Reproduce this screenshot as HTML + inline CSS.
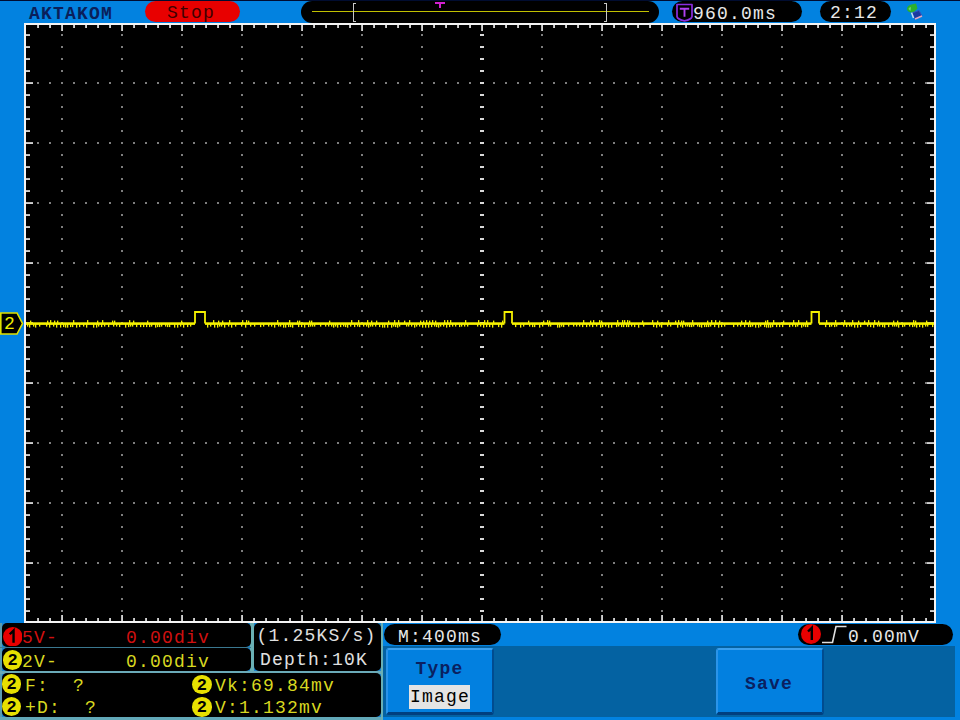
<!DOCTYPE html>
<html><head><meta charset="utf-8"><style>
*{margin:0;padding:0;box-sizing:border-box}
html,body{width:960px;height:720px;overflow:hidden;background:#0282e0}
body{position:relative;font-family:"Liberation Mono",monospace}
.a{position:absolute}
.t{position:absolute;white-space:pre;font-size:18px;line-height:20px;letter-spacing:1.2px}
.pill{position:absolute;background:#000;border-radius:11px}
.pan{position:absolute;background:#000;border-radius:5px}
.btn{position:absolute;background:#0280e0;border-radius:3px;border-top:2px solid #3aa0f0;border-left:2px solid #2a94ea;border-right:2px solid #004c90;border-bottom:3px solid #003f80}
</style></head><body>
<div class="a" style="left:0;top:0;width:960px;height:1px;background:#000c30"></div>
<div class="t" style="left:29px;top:4px;color:#0a1f5a;font-weight:bold">AKTAKOM</div>
<div class="pill" style="left:145px;top:1px;width:95px;height:21px;background:#e80000"></div>
<div class="t" style="left:167px;top:3px;color:#400000">Stop</div>
<div class="pill" style="left:301px;top:1px;width:358px;height:22px"></div>
<div class="a" style="left:312px;top:10.5px;width:337px;height:1.5px;background:#c0c000"></div>
<div class="a" style="left:353px;top:3px;width:3px;height:19px;border:1.5px solid #c8c8c8;border-right:none"></div>
<div class="a" style="left:604px;top:3px;width:3px;height:19px;border:1.5px solid #c8c8c8;border-left:none"></div>
<svg class="a" style="left:435px;top:2px" width="10" height="7"><path d="M0 0H10V2H6V6H4V2H0Z" fill="#d020d0"/></svg>
<div class="pill" style="left:672px;top:1px;width:130px;height:21px"></div>
<svg class="a" style="left:675px;top:3px" width="19" height="19"><path d="M2 1.5H17V13.5Q16.5 16.5 9.5 17.8Q2.5 16.5 2 13.5Z" fill="#000" stroke="#8a2ee0" stroke-width="1.7" stroke-linejoin="round"/><path d="M4.8 5.8H14.2M9.5 5.8V13.8" stroke="#b040f0" stroke-width="1.9"/></svg>
<div class="t" style="left:693px;top:4px;color:#e8e8e8">960.0ms</div>
<div class="pill" style="left:820px;top:1px;width:71px;height:21px"></div>
<div class="t" style="left:830px;top:3px;color:#e8e8e8">2:12</div>
<svg class="a" style="left:904px;top:2px" width="20" height="19"><path d="M8 11L15 8.5L18 14L11 17Z" fill="#1a3aa0" stroke="#3050c0" stroke-width="1"/><path d="M11 17L18 14" stroke="#e0a8c0" stroke-width="1.6"/><path d="M7.5 10.5L9.5 16" stroke="#c0e0f0" stroke-width="1.5"/><path d="M3 7C3 4.5 5 3 7.5 2.5L12 1.5L13.5 6.5L10.5 9.5L7 10.5C4.5 10 3 9 3 7Z" fill="#2cb02c"/><path d="M4.5 7C5 5.5 6 5 7 5.2L6.5 9Z" fill="#70d870"/></svg>
<svg width="960" height="720" style="position:absolute;left:0;top:0"><rect x="25" y="24" width="910" height="598" fill="#000"/><rect x="61" y="34.25" width="2" height="1.5" fill="#a8a8a8"/><rect x="61" y="46.25" width="2" height="1.5" fill="#a8a8a8"/><rect x="61" y="58.25" width="2" height="1.5" fill="#a8a8a8"/><rect x="61" y="70.25" width="2" height="1.5" fill="#a8a8a8"/><rect x="61" y="82.25" width="2" height="1.5" fill="#a8a8a8"/><rect x="61" y="94.25" width="2" height="1.5" fill="#a8a8a8"/><rect x="61" y="106.25" width="2" height="1.5" fill="#a8a8a8"/><rect x="61" y="118.25" width="2" height="1.5" fill="#a8a8a8"/><rect x="61" y="130.25" width="2" height="1.5" fill="#a8a8a8"/><rect x="61" y="142.25" width="2" height="1.5" fill="#a8a8a8"/><rect x="61" y="154.25" width="2" height="1.5" fill="#a8a8a8"/><rect x="61" y="166.25" width="2" height="1.5" fill="#a8a8a8"/><rect x="61" y="178.25" width="2" height="1.5" fill="#a8a8a8"/><rect x="61" y="190.25" width="2" height="1.5" fill="#a8a8a8"/><rect x="61" y="202.25" width="2" height="1.5" fill="#a8a8a8"/><rect x="61" y="214.25" width="2" height="1.5" fill="#a8a8a8"/><rect x="61" y="226.25" width="2" height="1.5" fill="#a8a8a8"/><rect x="61" y="238.25" width="2" height="1.5" fill="#a8a8a8"/><rect x="61" y="250.25" width="2" height="1.5" fill="#a8a8a8"/><rect x="61" y="262.25" width="2" height="1.5" fill="#a8a8a8"/><rect x="61" y="274.25" width="2" height="1.5" fill="#a8a8a8"/><rect x="61" y="286.25" width="2" height="1.5" fill="#a8a8a8"/><rect x="61" y="298.25" width="2" height="1.5" fill="#a8a8a8"/><rect x="61" y="310.25" width="2" height="1.5" fill="#a8a8a8"/><rect x="61" y="322.25" width="2" height="1.5" fill="#a8a8a8"/><rect x="61" y="334.25" width="2" height="1.5" fill="#a8a8a8"/><rect x="61" y="346.25" width="2" height="1.5" fill="#a8a8a8"/><rect x="61" y="358.25" width="2" height="1.5" fill="#a8a8a8"/><rect x="61" y="370.25" width="2" height="1.5" fill="#a8a8a8"/><rect x="61" y="382.25" width="2" height="1.5" fill="#a8a8a8"/><rect x="61" y="394.25" width="2" height="1.5" fill="#a8a8a8"/><rect x="61" y="406.25" width="2" height="1.5" fill="#a8a8a8"/><rect x="61" y="418.25" width="2" height="1.5" fill="#a8a8a8"/><rect x="61" y="430.25" width="2" height="1.5" fill="#a8a8a8"/><rect x="61" y="442.25" width="2" height="1.5" fill="#a8a8a8"/><rect x="61" y="454.25" width="2" height="1.5" fill="#a8a8a8"/><rect x="61" y="466.25" width="2" height="1.5" fill="#a8a8a8"/><rect x="61" y="478.25" width="2" height="1.5" fill="#a8a8a8"/><rect x="61" y="490.25" width="2" height="1.5" fill="#a8a8a8"/><rect x="61" y="502.25" width="2" height="1.5" fill="#a8a8a8"/><rect x="61" y="514.25" width="2" height="1.5" fill="#a8a8a8"/><rect x="61" y="526.25" width="2" height="1.5" fill="#a8a8a8"/><rect x="61" y="538.25" width="2" height="1.5" fill="#a8a8a8"/><rect x="61" y="550.25" width="2" height="1.5" fill="#a8a8a8"/><rect x="61" y="562.25" width="2" height="1.5" fill="#a8a8a8"/><rect x="61" y="574.25" width="2" height="1.5" fill="#a8a8a8"/><rect x="61" y="586.25" width="2" height="1.5" fill="#a8a8a8"/><rect x="61" y="598.25" width="2" height="1.5" fill="#a8a8a8"/><rect x="61" y="610.25" width="2" height="1.5" fill="#a8a8a8"/><rect x="121" y="34.25" width="2" height="1.5" fill="#a8a8a8"/><rect x="121" y="46.25" width="2" height="1.5" fill="#a8a8a8"/><rect x="121" y="58.25" width="2" height="1.5" fill="#a8a8a8"/><rect x="121" y="70.25" width="2" height="1.5" fill="#a8a8a8"/><rect x="121" y="82.25" width="2" height="1.5" fill="#a8a8a8"/><rect x="121" y="94.25" width="2" height="1.5" fill="#a8a8a8"/><rect x="121" y="106.25" width="2" height="1.5" fill="#a8a8a8"/><rect x="121" y="118.25" width="2" height="1.5" fill="#a8a8a8"/><rect x="121" y="130.25" width="2" height="1.5" fill="#a8a8a8"/><rect x="121" y="142.25" width="2" height="1.5" fill="#a8a8a8"/><rect x="121" y="154.25" width="2" height="1.5" fill="#a8a8a8"/><rect x="121" y="166.25" width="2" height="1.5" fill="#a8a8a8"/><rect x="121" y="178.25" width="2" height="1.5" fill="#a8a8a8"/><rect x="121" y="190.25" width="2" height="1.5" fill="#a8a8a8"/><rect x="121" y="202.25" width="2" height="1.5" fill="#a8a8a8"/><rect x="121" y="214.25" width="2" height="1.5" fill="#a8a8a8"/><rect x="121" y="226.25" width="2" height="1.5" fill="#a8a8a8"/><rect x="121" y="238.25" width="2" height="1.5" fill="#a8a8a8"/><rect x="121" y="250.25" width="2" height="1.5" fill="#a8a8a8"/><rect x="121" y="262.25" width="2" height="1.5" fill="#a8a8a8"/><rect x="121" y="274.25" width="2" height="1.5" fill="#a8a8a8"/><rect x="121" y="286.25" width="2" height="1.5" fill="#a8a8a8"/><rect x="121" y="298.25" width="2" height="1.5" fill="#a8a8a8"/><rect x="121" y="310.25" width="2" height="1.5" fill="#a8a8a8"/><rect x="121" y="322.25" width="2" height="1.5" fill="#a8a8a8"/><rect x="121" y="334.25" width="2" height="1.5" fill="#a8a8a8"/><rect x="121" y="346.25" width="2" height="1.5" fill="#a8a8a8"/><rect x="121" y="358.25" width="2" height="1.5" fill="#a8a8a8"/><rect x="121" y="370.25" width="2" height="1.5" fill="#a8a8a8"/><rect x="121" y="382.25" width="2" height="1.5" fill="#a8a8a8"/><rect x="121" y="394.25" width="2" height="1.5" fill="#a8a8a8"/><rect x="121" y="406.25" width="2" height="1.5" fill="#a8a8a8"/><rect x="121" y="418.25" width="2" height="1.5" fill="#a8a8a8"/><rect x="121" y="430.25" width="2" height="1.5" fill="#a8a8a8"/><rect x="121" y="442.25" width="2" height="1.5" fill="#a8a8a8"/><rect x="121" y="454.25" width="2" height="1.5" fill="#a8a8a8"/><rect x="121" y="466.25" width="2" height="1.5" fill="#a8a8a8"/><rect x="121" y="478.25" width="2" height="1.5" fill="#a8a8a8"/><rect x="121" y="490.25" width="2" height="1.5" fill="#a8a8a8"/><rect x="121" y="502.25" width="2" height="1.5" fill="#a8a8a8"/><rect x="121" y="514.25" width="2" height="1.5" fill="#a8a8a8"/><rect x="121" y="526.25" width="2" height="1.5" fill="#a8a8a8"/><rect x="121" y="538.25" width="2" height="1.5" fill="#a8a8a8"/><rect x="121" y="550.25" width="2" height="1.5" fill="#a8a8a8"/><rect x="121" y="562.25" width="2" height="1.5" fill="#a8a8a8"/><rect x="121" y="574.25" width="2" height="1.5" fill="#a8a8a8"/><rect x="121" y="586.25" width="2" height="1.5" fill="#a8a8a8"/><rect x="121" y="598.25" width="2" height="1.5" fill="#a8a8a8"/><rect x="121" y="610.25" width="2" height="1.5" fill="#a8a8a8"/><rect x="181" y="34.25" width="2" height="1.5" fill="#a8a8a8"/><rect x="181" y="46.25" width="2" height="1.5" fill="#a8a8a8"/><rect x="181" y="58.25" width="2" height="1.5" fill="#a8a8a8"/><rect x="181" y="70.25" width="2" height="1.5" fill="#a8a8a8"/><rect x="181" y="82.25" width="2" height="1.5" fill="#a8a8a8"/><rect x="181" y="94.25" width="2" height="1.5" fill="#a8a8a8"/><rect x="181" y="106.25" width="2" height="1.5" fill="#a8a8a8"/><rect x="181" y="118.25" width="2" height="1.5" fill="#a8a8a8"/><rect x="181" y="130.25" width="2" height="1.5" fill="#a8a8a8"/><rect x="181" y="142.25" width="2" height="1.5" fill="#a8a8a8"/><rect x="181" y="154.25" width="2" height="1.5" fill="#a8a8a8"/><rect x="181" y="166.25" width="2" height="1.5" fill="#a8a8a8"/><rect x="181" y="178.25" width="2" height="1.5" fill="#a8a8a8"/><rect x="181" y="190.25" width="2" height="1.5" fill="#a8a8a8"/><rect x="181" y="202.25" width="2" height="1.5" fill="#a8a8a8"/><rect x="181" y="214.25" width="2" height="1.5" fill="#a8a8a8"/><rect x="181" y="226.25" width="2" height="1.5" fill="#a8a8a8"/><rect x="181" y="238.25" width="2" height="1.5" fill="#a8a8a8"/><rect x="181" y="250.25" width="2" height="1.5" fill="#a8a8a8"/><rect x="181" y="262.25" width="2" height="1.5" fill="#a8a8a8"/><rect x="181" y="274.25" width="2" height="1.5" fill="#a8a8a8"/><rect x="181" y="286.25" width="2" height="1.5" fill="#a8a8a8"/><rect x="181" y="298.25" width="2" height="1.5" fill="#a8a8a8"/><rect x="181" y="310.25" width="2" height="1.5" fill="#a8a8a8"/><rect x="181" y="322.25" width="2" height="1.5" fill="#a8a8a8"/><rect x="181" y="334.25" width="2" height="1.5" fill="#a8a8a8"/><rect x="181" y="346.25" width="2" height="1.5" fill="#a8a8a8"/><rect x="181" y="358.25" width="2" height="1.5" fill="#a8a8a8"/><rect x="181" y="370.25" width="2" height="1.5" fill="#a8a8a8"/><rect x="181" y="382.25" width="2" height="1.5" fill="#a8a8a8"/><rect x="181" y="394.25" width="2" height="1.5" fill="#a8a8a8"/><rect x="181" y="406.25" width="2" height="1.5" fill="#a8a8a8"/><rect x="181" y="418.25" width="2" height="1.5" fill="#a8a8a8"/><rect x="181" y="430.25" width="2" height="1.5" fill="#a8a8a8"/><rect x="181" y="442.25" width="2" height="1.5" fill="#a8a8a8"/><rect x="181" y="454.25" width="2" height="1.5" fill="#a8a8a8"/><rect x="181" y="466.25" width="2" height="1.5" fill="#a8a8a8"/><rect x="181" y="478.25" width="2" height="1.5" fill="#a8a8a8"/><rect x="181" y="490.25" width="2" height="1.5" fill="#a8a8a8"/><rect x="181" y="502.25" width="2" height="1.5" fill="#a8a8a8"/><rect x="181" y="514.25" width="2" height="1.5" fill="#a8a8a8"/><rect x="181" y="526.25" width="2" height="1.5" fill="#a8a8a8"/><rect x="181" y="538.25" width="2" height="1.5" fill="#a8a8a8"/><rect x="181" y="550.25" width="2" height="1.5" fill="#a8a8a8"/><rect x="181" y="562.25" width="2" height="1.5" fill="#a8a8a8"/><rect x="181" y="574.25" width="2" height="1.5" fill="#a8a8a8"/><rect x="181" y="586.25" width="2" height="1.5" fill="#a8a8a8"/><rect x="181" y="598.25" width="2" height="1.5" fill="#a8a8a8"/><rect x="181" y="610.25" width="2" height="1.5" fill="#a8a8a8"/><rect x="241" y="34.25" width="2" height="1.5" fill="#a8a8a8"/><rect x="241" y="46.25" width="2" height="1.5" fill="#a8a8a8"/><rect x="241" y="58.25" width="2" height="1.5" fill="#a8a8a8"/><rect x="241" y="70.25" width="2" height="1.5" fill="#a8a8a8"/><rect x="241" y="82.25" width="2" height="1.5" fill="#a8a8a8"/><rect x="241" y="94.25" width="2" height="1.5" fill="#a8a8a8"/><rect x="241" y="106.25" width="2" height="1.5" fill="#a8a8a8"/><rect x="241" y="118.25" width="2" height="1.5" fill="#a8a8a8"/><rect x="241" y="130.25" width="2" height="1.5" fill="#a8a8a8"/><rect x="241" y="142.25" width="2" height="1.5" fill="#a8a8a8"/><rect x="241" y="154.25" width="2" height="1.5" fill="#a8a8a8"/><rect x="241" y="166.25" width="2" height="1.5" fill="#a8a8a8"/><rect x="241" y="178.25" width="2" height="1.5" fill="#a8a8a8"/><rect x="241" y="190.25" width="2" height="1.5" fill="#a8a8a8"/><rect x="241" y="202.25" width="2" height="1.5" fill="#a8a8a8"/><rect x="241" y="214.25" width="2" height="1.5" fill="#a8a8a8"/><rect x="241" y="226.25" width="2" height="1.5" fill="#a8a8a8"/><rect x="241" y="238.25" width="2" height="1.5" fill="#a8a8a8"/><rect x="241" y="250.25" width="2" height="1.5" fill="#a8a8a8"/><rect x="241" y="262.25" width="2" height="1.5" fill="#a8a8a8"/><rect x="241" y="274.25" width="2" height="1.5" fill="#a8a8a8"/><rect x="241" y="286.25" width="2" height="1.5" fill="#a8a8a8"/><rect x="241" y="298.25" width="2" height="1.5" fill="#a8a8a8"/><rect x="241" y="310.25" width="2" height="1.5" fill="#a8a8a8"/><rect x="241" y="322.25" width="2" height="1.5" fill="#a8a8a8"/><rect x="241" y="334.25" width="2" height="1.5" fill="#a8a8a8"/><rect x="241" y="346.25" width="2" height="1.5" fill="#a8a8a8"/><rect x="241" y="358.25" width="2" height="1.5" fill="#a8a8a8"/><rect x="241" y="370.25" width="2" height="1.5" fill="#a8a8a8"/><rect x="241" y="382.25" width="2" height="1.5" fill="#a8a8a8"/><rect x="241" y="394.25" width="2" height="1.5" fill="#a8a8a8"/><rect x="241" y="406.25" width="2" height="1.5" fill="#a8a8a8"/><rect x="241" y="418.25" width="2" height="1.5" fill="#a8a8a8"/><rect x="241" y="430.25" width="2" height="1.5" fill="#a8a8a8"/><rect x="241" y="442.25" width="2" height="1.5" fill="#a8a8a8"/><rect x="241" y="454.25" width="2" height="1.5" fill="#a8a8a8"/><rect x="241" y="466.25" width="2" height="1.5" fill="#a8a8a8"/><rect x="241" y="478.25" width="2" height="1.5" fill="#a8a8a8"/><rect x="241" y="490.25" width="2" height="1.5" fill="#a8a8a8"/><rect x="241" y="502.25" width="2" height="1.5" fill="#a8a8a8"/><rect x="241" y="514.25" width="2" height="1.5" fill="#a8a8a8"/><rect x="241" y="526.25" width="2" height="1.5" fill="#a8a8a8"/><rect x="241" y="538.25" width="2" height="1.5" fill="#a8a8a8"/><rect x="241" y="550.25" width="2" height="1.5" fill="#a8a8a8"/><rect x="241" y="562.25" width="2" height="1.5" fill="#a8a8a8"/><rect x="241" y="574.25" width="2" height="1.5" fill="#a8a8a8"/><rect x="241" y="586.25" width="2" height="1.5" fill="#a8a8a8"/><rect x="241" y="598.25" width="2" height="1.5" fill="#a8a8a8"/><rect x="241" y="610.25" width="2" height="1.5" fill="#a8a8a8"/><rect x="301" y="34.25" width="2" height="1.5" fill="#a8a8a8"/><rect x="301" y="46.25" width="2" height="1.5" fill="#a8a8a8"/><rect x="301" y="58.25" width="2" height="1.5" fill="#a8a8a8"/><rect x="301" y="70.25" width="2" height="1.5" fill="#a8a8a8"/><rect x="301" y="82.25" width="2" height="1.5" fill="#a8a8a8"/><rect x="301" y="94.25" width="2" height="1.5" fill="#a8a8a8"/><rect x="301" y="106.25" width="2" height="1.5" fill="#a8a8a8"/><rect x="301" y="118.25" width="2" height="1.5" fill="#a8a8a8"/><rect x="301" y="130.25" width="2" height="1.5" fill="#a8a8a8"/><rect x="301" y="142.25" width="2" height="1.5" fill="#a8a8a8"/><rect x="301" y="154.25" width="2" height="1.5" fill="#a8a8a8"/><rect x="301" y="166.25" width="2" height="1.5" fill="#a8a8a8"/><rect x="301" y="178.25" width="2" height="1.5" fill="#a8a8a8"/><rect x="301" y="190.25" width="2" height="1.5" fill="#a8a8a8"/><rect x="301" y="202.25" width="2" height="1.5" fill="#a8a8a8"/><rect x="301" y="214.25" width="2" height="1.5" fill="#a8a8a8"/><rect x="301" y="226.25" width="2" height="1.5" fill="#a8a8a8"/><rect x="301" y="238.25" width="2" height="1.5" fill="#a8a8a8"/><rect x="301" y="250.25" width="2" height="1.5" fill="#a8a8a8"/><rect x="301" y="262.25" width="2" height="1.5" fill="#a8a8a8"/><rect x="301" y="274.25" width="2" height="1.5" fill="#a8a8a8"/><rect x="301" y="286.25" width="2" height="1.5" fill="#a8a8a8"/><rect x="301" y="298.25" width="2" height="1.5" fill="#a8a8a8"/><rect x="301" y="310.25" width="2" height="1.5" fill="#a8a8a8"/><rect x="301" y="322.25" width="2" height="1.5" fill="#a8a8a8"/><rect x="301" y="334.25" width="2" height="1.5" fill="#a8a8a8"/><rect x="301" y="346.25" width="2" height="1.5" fill="#a8a8a8"/><rect x="301" y="358.25" width="2" height="1.5" fill="#a8a8a8"/><rect x="301" y="370.25" width="2" height="1.5" fill="#a8a8a8"/><rect x="301" y="382.25" width="2" height="1.5" fill="#a8a8a8"/><rect x="301" y="394.25" width="2" height="1.5" fill="#a8a8a8"/><rect x="301" y="406.25" width="2" height="1.5" fill="#a8a8a8"/><rect x="301" y="418.25" width="2" height="1.5" fill="#a8a8a8"/><rect x="301" y="430.25" width="2" height="1.5" fill="#a8a8a8"/><rect x="301" y="442.25" width="2" height="1.5" fill="#a8a8a8"/><rect x="301" y="454.25" width="2" height="1.5" fill="#a8a8a8"/><rect x="301" y="466.25" width="2" height="1.5" fill="#a8a8a8"/><rect x="301" y="478.25" width="2" height="1.5" fill="#a8a8a8"/><rect x="301" y="490.25" width="2" height="1.5" fill="#a8a8a8"/><rect x="301" y="502.25" width="2" height="1.5" fill="#a8a8a8"/><rect x="301" y="514.25" width="2" height="1.5" fill="#a8a8a8"/><rect x="301" y="526.25" width="2" height="1.5" fill="#a8a8a8"/><rect x="301" y="538.25" width="2" height="1.5" fill="#a8a8a8"/><rect x="301" y="550.25" width="2" height="1.5" fill="#a8a8a8"/><rect x="301" y="562.25" width="2" height="1.5" fill="#a8a8a8"/><rect x="301" y="574.25" width="2" height="1.5" fill="#a8a8a8"/><rect x="301" y="586.25" width="2" height="1.5" fill="#a8a8a8"/><rect x="301" y="598.25" width="2" height="1.5" fill="#a8a8a8"/><rect x="301" y="610.25" width="2" height="1.5" fill="#a8a8a8"/><rect x="361" y="34.25" width="2" height="1.5" fill="#a8a8a8"/><rect x="361" y="46.25" width="2" height="1.5" fill="#a8a8a8"/><rect x="361" y="58.25" width="2" height="1.5" fill="#a8a8a8"/><rect x="361" y="70.25" width="2" height="1.5" fill="#a8a8a8"/><rect x="361" y="82.25" width="2" height="1.5" fill="#a8a8a8"/><rect x="361" y="94.25" width="2" height="1.5" fill="#a8a8a8"/><rect x="361" y="106.25" width="2" height="1.5" fill="#a8a8a8"/><rect x="361" y="118.25" width="2" height="1.5" fill="#a8a8a8"/><rect x="361" y="130.25" width="2" height="1.5" fill="#a8a8a8"/><rect x="361" y="142.25" width="2" height="1.5" fill="#a8a8a8"/><rect x="361" y="154.25" width="2" height="1.5" fill="#a8a8a8"/><rect x="361" y="166.25" width="2" height="1.5" fill="#a8a8a8"/><rect x="361" y="178.25" width="2" height="1.5" fill="#a8a8a8"/><rect x="361" y="190.25" width="2" height="1.5" fill="#a8a8a8"/><rect x="361" y="202.25" width="2" height="1.5" fill="#a8a8a8"/><rect x="361" y="214.25" width="2" height="1.5" fill="#a8a8a8"/><rect x="361" y="226.25" width="2" height="1.5" fill="#a8a8a8"/><rect x="361" y="238.25" width="2" height="1.5" fill="#a8a8a8"/><rect x="361" y="250.25" width="2" height="1.5" fill="#a8a8a8"/><rect x="361" y="262.25" width="2" height="1.5" fill="#a8a8a8"/><rect x="361" y="274.25" width="2" height="1.5" fill="#a8a8a8"/><rect x="361" y="286.25" width="2" height="1.5" fill="#a8a8a8"/><rect x="361" y="298.25" width="2" height="1.5" fill="#a8a8a8"/><rect x="361" y="310.25" width="2" height="1.5" fill="#a8a8a8"/><rect x="361" y="322.25" width="2" height="1.5" fill="#a8a8a8"/><rect x="361" y="334.25" width="2" height="1.5" fill="#a8a8a8"/><rect x="361" y="346.25" width="2" height="1.5" fill="#a8a8a8"/><rect x="361" y="358.25" width="2" height="1.5" fill="#a8a8a8"/><rect x="361" y="370.25" width="2" height="1.5" fill="#a8a8a8"/><rect x="361" y="382.25" width="2" height="1.5" fill="#a8a8a8"/><rect x="361" y="394.25" width="2" height="1.5" fill="#a8a8a8"/><rect x="361" y="406.25" width="2" height="1.5" fill="#a8a8a8"/><rect x="361" y="418.25" width="2" height="1.5" fill="#a8a8a8"/><rect x="361" y="430.25" width="2" height="1.5" fill="#a8a8a8"/><rect x="361" y="442.25" width="2" height="1.5" fill="#a8a8a8"/><rect x="361" y="454.25" width="2" height="1.5" fill="#a8a8a8"/><rect x="361" y="466.25" width="2" height="1.5" fill="#a8a8a8"/><rect x="361" y="478.25" width="2" height="1.5" fill="#a8a8a8"/><rect x="361" y="490.25" width="2" height="1.5" fill="#a8a8a8"/><rect x="361" y="502.25" width="2" height="1.5" fill="#a8a8a8"/><rect x="361" y="514.25" width="2" height="1.5" fill="#a8a8a8"/><rect x="361" y="526.25" width="2" height="1.5" fill="#a8a8a8"/><rect x="361" y="538.25" width="2" height="1.5" fill="#a8a8a8"/><rect x="361" y="550.25" width="2" height="1.5" fill="#a8a8a8"/><rect x="361" y="562.25" width="2" height="1.5" fill="#a8a8a8"/><rect x="361" y="574.25" width="2" height="1.5" fill="#a8a8a8"/><rect x="361" y="586.25" width="2" height="1.5" fill="#a8a8a8"/><rect x="361" y="598.25" width="2" height="1.5" fill="#a8a8a8"/><rect x="361" y="610.25" width="2" height="1.5" fill="#a8a8a8"/><rect x="421" y="34.25" width="2" height="1.5" fill="#a8a8a8"/><rect x="421" y="46.25" width="2" height="1.5" fill="#a8a8a8"/><rect x="421" y="58.25" width="2" height="1.5" fill="#a8a8a8"/><rect x="421" y="70.25" width="2" height="1.5" fill="#a8a8a8"/><rect x="421" y="82.25" width="2" height="1.5" fill="#a8a8a8"/><rect x="421" y="94.25" width="2" height="1.5" fill="#a8a8a8"/><rect x="421" y="106.25" width="2" height="1.5" fill="#a8a8a8"/><rect x="421" y="118.25" width="2" height="1.5" fill="#a8a8a8"/><rect x="421" y="130.25" width="2" height="1.5" fill="#a8a8a8"/><rect x="421" y="142.25" width="2" height="1.5" fill="#a8a8a8"/><rect x="421" y="154.25" width="2" height="1.5" fill="#a8a8a8"/><rect x="421" y="166.25" width="2" height="1.5" fill="#a8a8a8"/><rect x="421" y="178.25" width="2" height="1.5" fill="#a8a8a8"/><rect x="421" y="190.25" width="2" height="1.5" fill="#a8a8a8"/><rect x="421" y="202.25" width="2" height="1.5" fill="#a8a8a8"/><rect x="421" y="214.25" width="2" height="1.5" fill="#a8a8a8"/><rect x="421" y="226.25" width="2" height="1.5" fill="#a8a8a8"/><rect x="421" y="238.25" width="2" height="1.5" fill="#a8a8a8"/><rect x="421" y="250.25" width="2" height="1.5" fill="#a8a8a8"/><rect x="421" y="262.25" width="2" height="1.5" fill="#a8a8a8"/><rect x="421" y="274.25" width="2" height="1.5" fill="#a8a8a8"/><rect x="421" y="286.25" width="2" height="1.5" fill="#a8a8a8"/><rect x="421" y="298.25" width="2" height="1.5" fill="#a8a8a8"/><rect x="421" y="310.25" width="2" height="1.5" fill="#a8a8a8"/><rect x="421" y="322.25" width="2" height="1.5" fill="#a8a8a8"/><rect x="421" y="334.25" width="2" height="1.5" fill="#a8a8a8"/><rect x="421" y="346.25" width="2" height="1.5" fill="#a8a8a8"/><rect x="421" y="358.25" width="2" height="1.5" fill="#a8a8a8"/><rect x="421" y="370.25" width="2" height="1.5" fill="#a8a8a8"/><rect x="421" y="382.25" width="2" height="1.5" fill="#a8a8a8"/><rect x="421" y="394.25" width="2" height="1.5" fill="#a8a8a8"/><rect x="421" y="406.25" width="2" height="1.5" fill="#a8a8a8"/><rect x="421" y="418.25" width="2" height="1.5" fill="#a8a8a8"/><rect x="421" y="430.25" width="2" height="1.5" fill="#a8a8a8"/><rect x="421" y="442.25" width="2" height="1.5" fill="#a8a8a8"/><rect x="421" y="454.25" width="2" height="1.5" fill="#a8a8a8"/><rect x="421" y="466.25" width="2" height="1.5" fill="#a8a8a8"/><rect x="421" y="478.25" width="2" height="1.5" fill="#a8a8a8"/><rect x="421" y="490.25" width="2" height="1.5" fill="#a8a8a8"/><rect x="421" y="502.25" width="2" height="1.5" fill="#a8a8a8"/><rect x="421" y="514.25" width="2" height="1.5" fill="#a8a8a8"/><rect x="421" y="526.25" width="2" height="1.5" fill="#a8a8a8"/><rect x="421" y="538.25" width="2" height="1.5" fill="#a8a8a8"/><rect x="421" y="550.25" width="2" height="1.5" fill="#a8a8a8"/><rect x="421" y="562.25" width="2" height="1.5" fill="#a8a8a8"/><rect x="421" y="574.25" width="2" height="1.5" fill="#a8a8a8"/><rect x="421" y="586.25" width="2" height="1.5" fill="#a8a8a8"/><rect x="421" y="598.25" width="2" height="1.5" fill="#a8a8a8"/><rect x="421" y="610.25" width="2" height="1.5" fill="#a8a8a8"/><rect x="480" y="34" width="4" height="2" fill="#d8d8d8"/><rect x="480" y="46" width="4" height="2" fill="#d8d8d8"/><rect x="480" y="58" width="4" height="2" fill="#d8d8d8"/><rect x="480" y="70" width="4" height="2" fill="#d8d8d8"/><rect x="480" y="82" width="4" height="2" fill="#d8d8d8"/><rect x="480" y="94" width="4" height="2" fill="#d8d8d8"/><rect x="480" y="106" width="4" height="2" fill="#d8d8d8"/><rect x="480" y="118" width="4" height="2" fill="#d8d8d8"/><rect x="480" y="130" width="4" height="2" fill="#d8d8d8"/><rect x="480" y="142" width="4" height="2" fill="#d8d8d8"/><rect x="480" y="154" width="4" height="2" fill="#d8d8d8"/><rect x="480" y="166" width="4" height="2" fill="#d8d8d8"/><rect x="480" y="178" width="4" height="2" fill="#d8d8d8"/><rect x="480" y="190" width="4" height="2" fill="#d8d8d8"/><rect x="480" y="202" width="4" height="2" fill="#d8d8d8"/><rect x="480" y="214" width="4" height="2" fill="#d8d8d8"/><rect x="480" y="226" width="4" height="2" fill="#d8d8d8"/><rect x="480" y="238" width="4" height="2" fill="#d8d8d8"/><rect x="480" y="250" width="4" height="2" fill="#d8d8d8"/><rect x="480" y="262" width="4" height="2" fill="#d8d8d8"/><rect x="480" y="274" width="4" height="2" fill="#d8d8d8"/><rect x="480" y="286" width="4" height="2" fill="#d8d8d8"/><rect x="480" y="298" width="4" height="2" fill="#d8d8d8"/><rect x="480" y="310" width="4" height="2" fill="#d8d8d8"/><rect x="480" y="322" width="4" height="2" fill="#d8d8d8"/><rect x="480" y="334" width="4" height="2" fill="#d8d8d8"/><rect x="480" y="346" width="4" height="2" fill="#d8d8d8"/><rect x="480" y="358" width="4" height="2" fill="#d8d8d8"/><rect x="480" y="370" width="4" height="2" fill="#d8d8d8"/><rect x="480" y="382" width="4" height="2" fill="#d8d8d8"/><rect x="480" y="394" width="4" height="2" fill="#d8d8d8"/><rect x="480" y="406" width="4" height="2" fill="#d8d8d8"/><rect x="480" y="418" width="4" height="2" fill="#d8d8d8"/><rect x="480" y="430" width="4" height="2" fill="#d8d8d8"/><rect x="480" y="442" width="4" height="2" fill="#d8d8d8"/><rect x="480" y="454" width="4" height="2" fill="#d8d8d8"/><rect x="480" y="466" width="4" height="2" fill="#d8d8d8"/><rect x="480" y="478" width="4" height="2" fill="#d8d8d8"/><rect x="480" y="490" width="4" height="2" fill="#d8d8d8"/><rect x="480" y="502" width="4" height="2" fill="#d8d8d8"/><rect x="480" y="514" width="4" height="2" fill="#d8d8d8"/><rect x="480" y="526" width="4" height="2" fill="#d8d8d8"/><rect x="480" y="538" width="4" height="2" fill="#d8d8d8"/><rect x="480" y="550" width="4" height="2" fill="#d8d8d8"/><rect x="480" y="562" width="4" height="2" fill="#d8d8d8"/><rect x="480" y="574" width="4" height="2" fill="#d8d8d8"/><rect x="480" y="586" width="4" height="2" fill="#d8d8d8"/><rect x="480" y="598" width="4" height="2" fill="#d8d8d8"/><rect x="480" y="610" width="4" height="2" fill="#d8d8d8"/><rect x="541" y="34.25" width="2" height="1.5" fill="#a8a8a8"/><rect x="541" y="46.25" width="2" height="1.5" fill="#a8a8a8"/><rect x="541" y="58.25" width="2" height="1.5" fill="#a8a8a8"/><rect x="541" y="70.25" width="2" height="1.5" fill="#a8a8a8"/><rect x="541" y="82.25" width="2" height="1.5" fill="#a8a8a8"/><rect x="541" y="94.25" width="2" height="1.5" fill="#a8a8a8"/><rect x="541" y="106.25" width="2" height="1.5" fill="#a8a8a8"/><rect x="541" y="118.25" width="2" height="1.5" fill="#a8a8a8"/><rect x="541" y="130.25" width="2" height="1.5" fill="#a8a8a8"/><rect x="541" y="142.25" width="2" height="1.5" fill="#a8a8a8"/><rect x="541" y="154.25" width="2" height="1.5" fill="#a8a8a8"/><rect x="541" y="166.25" width="2" height="1.5" fill="#a8a8a8"/><rect x="541" y="178.25" width="2" height="1.5" fill="#a8a8a8"/><rect x="541" y="190.25" width="2" height="1.5" fill="#a8a8a8"/><rect x="541" y="202.25" width="2" height="1.5" fill="#a8a8a8"/><rect x="541" y="214.25" width="2" height="1.5" fill="#a8a8a8"/><rect x="541" y="226.25" width="2" height="1.5" fill="#a8a8a8"/><rect x="541" y="238.25" width="2" height="1.5" fill="#a8a8a8"/><rect x="541" y="250.25" width="2" height="1.5" fill="#a8a8a8"/><rect x="541" y="262.25" width="2" height="1.5" fill="#a8a8a8"/><rect x="541" y="274.25" width="2" height="1.5" fill="#a8a8a8"/><rect x="541" y="286.25" width="2" height="1.5" fill="#a8a8a8"/><rect x="541" y="298.25" width="2" height="1.5" fill="#a8a8a8"/><rect x="541" y="310.25" width="2" height="1.5" fill="#a8a8a8"/><rect x="541" y="322.25" width="2" height="1.5" fill="#a8a8a8"/><rect x="541" y="334.25" width="2" height="1.5" fill="#a8a8a8"/><rect x="541" y="346.25" width="2" height="1.5" fill="#a8a8a8"/><rect x="541" y="358.25" width="2" height="1.5" fill="#a8a8a8"/><rect x="541" y="370.25" width="2" height="1.5" fill="#a8a8a8"/><rect x="541" y="382.25" width="2" height="1.5" fill="#a8a8a8"/><rect x="541" y="394.25" width="2" height="1.5" fill="#a8a8a8"/><rect x="541" y="406.25" width="2" height="1.5" fill="#a8a8a8"/><rect x="541" y="418.25" width="2" height="1.5" fill="#a8a8a8"/><rect x="541" y="430.25" width="2" height="1.5" fill="#a8a8a8"/><rect x="541" y="442.25" width="2" height="1.5" fill="#a8a8a8"/><rect x="541" y="454.25" width="2" height="1.5" fill="#a8a8a8"/><rect x="541" y="466.25" width="2" height="1.5" fill="#a8a8a8"/><rect x="541" y="478.25" width="2" height="1.5" fill="#a8a8a8"/><rect x="541" y="490.25" width="2" height="1.5" fill="#a8a8a8"/><rect x="541" y="502.25" width="2" height="1.5" fill="#a8a8a8"/><rect x="541" y="514.25" width="2" height="1.5" fill="#a8a8a8"/><rect x="541" y="526.25" width="2" height="1.5" fill="#a8a8a8"/><rect x="541" y="538.25" width="2" height="1.5" fill="#a8a8a8"/><rect x="541" y="550.25" width="2" height="1.5" fill="#a8a8a8"/><rect x="541" y="562.25" width="2" height="1.5" fill="#a8a8a8"/><rect x="541" y="574.25" width="2" height="1.5" fill="#a8a8a8"/><rect x="541" y="586.25" width="2" height="1.5" fill="#a8a8a8"/><rect x="541" y="598.25" width="2" height="1.5" fill="#a8a8a8"/><rect x="541" y="610.25" width="2" height="1.5" fill="#a8a8a8"/><rect x="601" y="34.25" width="2" height="1.5" fill="#a8a8a8"/><rect x="601" y="46.25" width="2" height="1.5" fill="#a8a8a8"/><rect x="601" y="58.25" width="2" height="1.5" fill="#a8a8a8"/><rect x="601" y="70.25" width="2" height="1.5" fill="#a8a8a8"/><rect x="601" y="82.25" width="2" height="1.5" fill="#a8a8a8"/><rect x="601" y="94.25" width="2" height="1.5" fill="#a8a8a8"/><rect x="601" y="106.25" width="2" height="1.5" fill="#a8a8a8"/><rect x="601" y="118.25" width="2" height="1.5" fill="#a8a8a8"/><rect x="601" y="130.25" width="2" height="1.5" fill="#a8a8a8"/><rect x="601" y="142.25" width="2" height="1.5" fill="#a8a8a8"/><rect x="601" y="154.25" width="2" height="1.5" fill="#a8a8a8"/><rect x="601" y="166.25" width="2" height="1.5" fill="#a8a8a8"/><rect x="601" y="178.25" width="2" height="1.5" fill="#a8a8a8"/><rect x="601" y="190.25" width="2" height="1.5" fill="#a8a8a8"/><rect x="601" y="202.25" width="2" height="1.5" fill="#a8a8a8"/><rect x="601" y="214.25" width="2" height="1.5" fill="#a8a8a8"/><rect x="601" y="226.25" width="2" height="1.5" fill="#a8a8a8"/><rect x="601" y="238.25" width="2" height="1.5" fill="#a8a8a8"/><rect x="601" y="250.25" width="2" height="1.5" fill="#a8a8a8"/><rect x="601" y="262.25" width="2" height="1.5" fill="#a8a8a8"/><rect x="601" y="274.25" width="2" height="1.5" fill="#a8a8a8"/><rect x="601" y="286.25" width="2" height="1.5" fill="#a8a8a8"/><rect x="601" y="298.25" width="2" height="1.5" fill="#a8a8a8"/><rect x="601" y="310.25" width="2" height="1.5" fill="#a8a8a8"/><rect x="601" y="322.25" width="2" height="1.5" fill="#a8a8a8"/><rect x="601" y="334.25" width="2" height="1.5" fill="#a8a8a8"/><rect x="601" y="346.25" width="2" height="1.5" fill="#a8a8a8"/><rect x="601" y="358.25" width="2" height="1.5" fill="#a8a8a8"/><rect x="601" y="370.25" width="2" height="1.5" fill="#a8a8a8"/><rect x="601" y="382.25" width="2" height="1.5" fill="#a8a8a8"/><rect x="601" y="394.25" width="2" height="1.5" fill="#a8a8a8"/><rect x="601" y="406.25" width="2" height="1.5" fill="#a8a8a8"/><rect x="601" y="418.25" width="2" height="1.5" fill="#a8a8a8"/><rect x="601" y="430.25" width="2" height="1.5" fill="#a8a8a8"/><rect x="601" y="442.25" width="2" height="1.5" fill="#a8a8a8"/><rect x="601" y="454.25" width="2" height="1.5" fill="#a8a8a8"/><rect x="601" y="466.25" width="2" height="1.5" fill="#a8a8a8"/><rect x="601" y="478.25" width="2" height="1.5" fill="#a8a8a8"/><rect x="601" y="490.25" width="2" height="1.5" fill="#a8a8a8"/><rect x="601" y="502.25" width="2" height="1.5" fill="#a8a8a8"/><rect x="601" y="514.25" width="2" height="1.5" fill="#a8a8a8"/><rect x="601" y="526.25" width="2" height="1.5" fill="#a8a8a8"/><rect x="601" y="538.25" width="2" height="1.5" fill="#a8a8a8"/><rect x="601" y="550.25" width="2" height="1.5" fill="#a8a8a8"/><rect x="601" y="562.25" width="2" height="1.5" fill="#a8a8a8"/><rect x="601" y="574.25" width="2" height="1.5" fill="#a8a8a8"/><rect x="601" y="586.25" width="2" height="1.5" fill="#a8a8a8"/><rect x="601" y="598.25" width="2" height="1.5" fill="#a8a8a8"/><rect x="601" y="610.25" width="2" height="1.5" fill="#a8a8a8"/><rect x="661" y="34.25" width="2" height="1.5" fill="#a8a8a8"/><rect x="661" y="46.25" width="2" height="1.5" fill="#a8a8a8"/><rect x="661" y="58.25" width="2" height="1.5" fill="#a8a8a8"/><rect x="661" y="70.25" width="2" height="1.5" fill="#a8a8a8"/><rect x="661" y="82.25" width="2" height="1.5" fill="#a8a8a8"/><rect x="661" y="94.25" width="2" height="1.5" fill="#a8a8a8"/><rect x="661" y="106.25" width="2" height="1.5" fill="#a8a8a8"/><rect x="661" y="118.25" width="2" height="1.5" fill="#a8a8a8"/><rect x="661" y="130.25" width="2" height="1.5" fill="#a8a8a8"/><rect x="661" y="142.25" width="2" height="1.5" fill="#a8a8a8"/><rect x="661" y="154.25" width="2" height="1.5" fill="#a8a8a8"/><rect x="661" y="166.25" width="2" height="1.5" fill="#a8a8a8"/><rect x="661" y="178.25" width="2" height="1.5" fill="#a8a8a8"/><rect x="661" y="190.25" width="2" height="1.5" fill="#a8a8a8"/><rect x="661" y="202.25" width="2" height="1.5" fill="#a8a8a8"/><rect x="661" y="214.25" width="2" height="1.5" fill="#a8a8a8"/><rect x="661" y="226.25" width="2" height="1.5" fill="#a8a8a8"/><rect x="661" y="238.25" width="2" height="1.5" fill="#a8a8a8"/><rect x="661" y="250.25" width="2" height="1.5" fill="#a8a8a8"/><rect x="661" y="262.25" width="2" height="1.5" fill="#a8a8a8"/><rect x="661" y="274.25" width="2" height="1.5" fill="#a8a8a8"/><rect x="661" y="286.25" width="2" height="1.5" fill="#a8a8a8"/><rect x="661" y="298.25" width="2" height="1.5" fill="#a8a8a8"/><rect x="661" y="310.25" width="2" height="1.5" fill="#a8a8a8"/><rect x="661" y="322.25" width="2" height="1.5" fill="#a8a8a8"/><rect x="661" y="334.25" width="2" height="1.5" fill="#a8a8a8"/><rect x="661" y="346.25" width="2" height="1.5" fill="#a8a8a8"/><rect x="661" y="358.25" width="2" height="1.5" fill="#a8a8a8"/><rect x="661" y="370.25" width="2" height="1.5" fill="#a8a8a8"/><rect x="661" y="382.25" width="2" height="1.5" fill="#a8a8a8"/><rect x="661" y="394.25" width="2" height="1.5" fill="#a8a8a8"/><rect x="661" y="406.25" width="2" height="1.5" fill="#a8a8a8"/><rect x="661" y="418.25" width="2" height="1.5" fill="#a8a8a8"/><rect x="661" y="430.25" width="2" height="1.5" fill="#a8a8a8"/><rect x="661" y="442.25" width="2" height="1.5" fill="#a8a8a8"/><rect x="661" y="454.25" width="2" height="1.5" fill="#a8a8a8"/><rect x="661" y="466.25" width="2" height="1.5" fill="#a8a8a8"/><rect x="661" y="478.25" width="2" height="1.5" fill="#a8a8a8"/><rect x="661" y="490.25" width="2" height="1.5" fill="#a8a8a8"/><rect x="661" y="502.25" width="2" height="1.5" fill="#a8a8a8"/><rect x="661" y="514.25" width="2" height="1.5" fill="#a8a8a8"/><rect x="661" y="526.25" width="2" height="1.5" fill="#a8a8a8"/><rect x="661" y="538.25" width="2" height="1.5" fill="#a8a8a8"/><rect x="661" y="550.25" width="2" height="1.5" fill="#a8a8a8"/><rect x="661" y="562.25" width="2" height="1.5" fill="#a8a8a8"/><rect x="661" y="574.25" width="2" height="1.5" fill="#a8a8a8"/><rect x="661" y="586.25" width="2" height="1.5" fill="#a8a8a8"/><rect x="661" y="598.25" width="2" height="1.5" fill="#a8a8a8"/><rect x="661" y="610.25" width="2" height="1.5" fill="#a8a8a8"/><rect x="721" y="34.25" width="2" height="1.5" fill="#a8a8a8"/><rect x="721" y="46.25" width="2" height="1.5" fill="#a8a8a8"/><rect x="721" y="58.25" width="2" height="1.5" fill="#a8a8a8"/><rect x="721" y="70.25" width="2" height="1.5" fill="#a8a8a8"/><rect x="721" y="82.25" width="2" height="1.5" fill="#a8a8a8"/><rect x="721" y="94.25" width="2" height="1.5" fill="#a8a8a8"/><rect x="721" y="106.25" width="2" height="1.5" fill="#a8a8a8"/><rect x="721" y="118.25" width="2" height="1.5" fill="#a8a8a8"/><rect x="721" y="130.25" width="2" height="1.5" fill="#a8a8a8"/><rect x="721" y="142.25" width="2" height="1.5" fill="#a8a8a8"/><rect x="721" y="154.25" width="2" height="1.5" fill="#a8a8a8"/><rect x="721" y="166.25" width="2" height="1.5" fill="#a8a8a8"/><rect x="721" y="178.25" width="2" height="1.5" fill="#a8a8a8"/><rect x="721" y="190.25" width="2" height="1.5" fill="#a8a8a8"/><rect x="721" y="202.25" width="2" height="1.5" fill="#a8a8a8"/><rect x="721" y="214.25" width="2" height="1.5" fill="#a8a8a8"/><rect x="721" y="226.25" width="2" height="1.5" fill="#a8a8a8"/><rect x="721" y="238.25" width="2" height="1.5" fill="#a8a8a8"/><rect x="721" y="250.25" width="2" height="1.5" fill="#a8a8a8"/><rect x="721" y="262.25" width="2" height="1.5" fill="#a8a8a8"/><rect x="721" y="274.25" width="2" height="1.5" fill="#a8a8a8"/><rect x="721" y="286.25" width="2" height="1.5" fill="#a8a8a8"/><rect x="721" y="298.25" width="2" height="1.5" fill="#a8a8a8"/><rect x="721" y="310.25" width="2" height="1.5" fill="#a8a8a8"/><rect x="721" y="322.25" width="2" height="1.5" fill="#a8a8a8"/><rect x="721" y="334.25" width="2" height="1.5" fill="#a8a8a8"/><rect x="721" y="346.25" width="2" height="1.5" fill="#a8a8a8"/><rect x="721" y="358.25" width="2" height="1.5" fill="#a8a8a8"/><rect x="721" y="370.25" width="2" height="1.5" fill="#a8a8a8"/><rect x="721" y="382.25" width="2" height="1.5" fill="#a8a8a8"/><rect x="721" y="394.25" width="2" height="1.5" fill="#a8a8a8"/><rect x="721" y="406.25" width="2" height="1.5" fill="#a8a8a8"/><rect x="721" y="418.25" width="2" height="1.5" fill="#a8a8a8"/><rect x="721" y="430.25" width="2" height="1.5" fill="#a8a8a8"/><rect x="721" y="442.25" width="2" height="1.5" fill="#a8a8a8"/><rect x="721" y="454.25" width="2" height="1.5" fill="#a8a8a8"/><rect x="721" y="466.25" width="2" height="1.5" fill="#a8a8a8"/><rect x="721" y="478.25" width="2" height="1.5" fill="#a8a8a8"/><rect x="721" y="490.25" width="2" height="1.5" fill="#a8a8a8"/><rect x="721" y="502.25" width="2" height="1.5" fill="#a8a8a8"/><rect x="721" y="514.25" width="2" height="1.5" fill="#a8a8a8"/><rect x="721" y="526.25" width="2" height="1.5" fill="#a8a8a8"/><rect x="721" y="538.25" width="2" height="1.5" fill="#a8a8a8"/><rect x="721" y="550.25" width="2" height="1.5" fill="#a8a8a8"/><rect x="721" y="562.25" width="2" height="1.5" fill="#a8a8a8"/><rect x="721" y="574.25" width="2" height="1.5" fill="#a8a8a8"/><rect x="721" y="586.25" width="2" height="1.5" fill="#a8a8a8"/><rect x="721" y="598.25" width="2" height="1.5" fill="#a8a8a8"/><rect x="721" y="610.25" width="2" height="1.5" fill="#a8a8a8"/><rect x="781" y="34.25" width="2" height="1.5" fill="#a8a8a8"/><rect x="781" y="46.25" width="2" height="1.5" fill="#a8a8a8"/><rect x="781" y="58.25" width="2" height="1.5" fill="#a8a8a8"/><rect x="781" y="70.25" width="2" height="1.5" fill="#a8a8a8"/><rect x="781" y="82.25" width="2" height="1.5" fill="#a8a8a8"/><rect x="781" y="94.25" width="2" height="1.5" fill="#a8a8a8"/><rect x="781" y="106.25" width="2" height="1.5" fill="#a8a8a8"/><rect x="781" y="118.25" width="2" height="1.5" fill="#a8a8a8"/><rect x="781" y="130.25" width="2" height="1.5" fill="#a8a8a8"/><rect x="781" y="142.25" width="2" height="1.5" fill="#a8a8a8"/><rect x="781" y="154.25" width="2" height="1.5" fill="#a8a8a8"/><rect x="781" y="166.25" width="2" height="1.5" fill="#a8a8a8"/><rect x="781" y="178.25" width="2" height="1.5" fill="#a8a8a8"/><rect x="781" y="190.25" width="2" height="1.5" fill="#a8a8a8"/><rect x="781" y="202.25" width="2" height="1.5" fill="#a8a8a8"/><rect x="781" y="214.25" width="2" height="1.5" fill="#a8a8a8"/><rect x="781" y="226.25" width="2" height="1.5" fill="#a8a8a8"/><rect x="781" y="238.25" width="2" height="1.5" fill="#a8a8a8"/><rect x="781" y="250.25" width="2" height="1.5" fill="#a8a8a8"/><rect x="781" y="262.25" width="2" height="1.5" fill="#a8a8a8"/><rect x="781" y="274.25" width="2" height="1.5" fill="#a8a8a8"/><rect x="781" y="286.25" width="2" height="1.5" fill="#a8a8a8"/><rect x="781" y="298.25" width="2" height="1.5" fill="#a8a8a8"/><rect x="781" y="310.25" width="2" height="1.5" fill="#a8a8a8"/><rect x="781" y="322.25" width="2" height="1.5" fill="#a8a8a8"/><rect x="781" y="334.25" width="2" height="1.5" fill="#a8a8a8"/><rect x="781" y="346.25" width="2" height="1.5" fill="#a8a8a8"/><rect x="781" y="358.25" width="2" height="1.5" fill="#a8a8a8"/><rect x="781" y="370.25" width="2" height="1.5" fill="#a8a8a8"/><rect x="781" y="382.25" width="2" height="1.5" fill="#a8a8a8"/><rect x="781" y="394.25" width="2" height="1.5" fill="#a8a8a8"/><rect x="781" y="406.25" width="2" height="1.5" fill="#a8a8a8"/><rect x="781" y="418.25" width="2" height="1.5" fill="#a8a8a8"/><rect x="781" y="430.25" width="2" height="1.5" fill="#a8a8a8"/><rect x="781" y="442.25" width="2" height="1.5" fill="#a8a8a8"/><rect x="781" y="454.25" width="2" height="1.5" fill="#a8a8a8"/><rect x="781" y="466.25" width="2" height="1.5" fill="#a8a8a8"/><rect x="781" y="478.25" width="2" height="1.5" fill="#a8a8a8"/><rect x="781" y="490.25" width="2" height="1.5" fill="#a8a8a8"/><rect x="781" y="502.25" width="2" height="1.5" fill="#a8a8a8"/><rect x="781" y="514.25" width="2" height="1.5" fill="#a8a8a8"/><rect x="781" y="526.25" width="2" height="1.5" fill="#a8a8a8"/><rect x="781" y="538.25" width="2" height="1.5" fill="#a8a8a8"/><rect x="781" y="550.25" width="2" height="1.5" fill="#a8a8a8"/><rect x="781" y="562.25" width="2" height="1.5" fill="#a8a8a8"/><rect x="781" y="574.25" width="2" height="1.5" fill="#a8a8a8"/><rect x="781" y="586.25" width="2" height="1.5" fill="#a8a8a8"/><rect x="781" y="598.25" width="2" height="1.5" fill="#a8a8a8"/><rect x="781" y="610.25" width="2" height="1.5" fill="#a8a8a8"/><rect x="841" y="34.25" width="2" height="1.5" fill="#a8a8a8"/><rect x="841" y="46.25" width="2" height="1.5" fill="#a8a8a8"/><rect x="841" y="58.25" width="2" height="1.5" fill="#a8a8a8"/><rect x="841" y="70.25" width="2" height="1.5" fill="#a8a8a8"/><rect x="841" y="82.25" width="2" height="1.5" fill="#a8a8a8"/><rect x="841" y="94.25" width="2" height="1.5" fill="#a8a8a8"/><rect x="841" y="106.25" width="2" height="1.5" fill="#a8a8a8"/><rect x="841" y="118.25" width="2" height="1.5" fill="#a8a8a8"/><rect x="841" y="130.25" width="2" height="1.5" fill="#a8a8a8"/><rect x="841" y="142.25" width="2" height="1.5" fill="#a8a8a8"/><rect x="841" y="154.25" width="2" height="1.5" fill="#a8a8a8"/><rect x="841" y="166.25" width="2" height="1.5" fill="#a8a8a8"/><rect x="841" y="178.25" width="2" height="1.5" fill="#a8a8a8"/><rect x="841" y="190.25" width="2" height="1.5" fill="#a8a8a8"/><rect x="841" y="202.25" width="2" height="1.5" fill="#a8a8a8"/><rect x="841" y="214.25" width="2" height="1.5" fill="#a8a8a8"/><rect x="841" y="226.25" width="2" height="1.5" fill="#a8a8a8"/><rect x="841" y="238.25" width="2" height="1.5" fill="#a8a8a8"/><rect x="841" y="250.25" width="2" height="1.5" fill="#a8a8a8"/><rect x="841" y="262.25" width="2" height="1.5" fill="#a8a8a8"/><rect x="841" y="274.25" width="2" height="1.5" fill="#a8a8a8"/><rect x="841" y="286.25" width="2" height="1.5" fill="#a8a8a8"/><rect x="841" y="298.25" width="2" height="1.5" fill="#a8a8a8"/><rect x="841" y="310.25" width="2" height="1.5" fill="#a8a8a8"/><rect x="841" y="322.25" width="2" height="1.5" fill="#a8a8a8"/><rect x="841" y="334.25" width="2" height="1.5" fill="#a8a8a8"/><rect x="841" y="346.25" width="2" height="1.5" fill="#a8a8a8"/><rect x="841" y="358.25" width="2" height="1.5" fill="#a8a8a8"/><rect x="841" y="370.25" width="2" height="1.5" fill="#a8a8a8"/><rect x="841" y="382.25" width="2" height="1.5" fill="#a8a8a8"/><rect x="841" y="394.25" width="2" height="1.5" fill="#a8a8a8"/><rect x="841" y="406.25" width="2" height="1.5" fill="#a8a8a8"/><rect x="841" y="418.25" width="2" height="1.5" fill="#a8a8a8"/><rect x="841" y="430.25" width="2" height="1.5" fill="#a8a8a8"/><rect x="841" y="442.25" width="2" height="1.5" fill="#a8a8a8"/><rect x="841" y="454.25" width="2" height="1.5" fill="#a8a8a8"/><rect x="841" y="466.25" width="2" height="1.5" fill="#a8a8a8"/><rect x="841" y="478.25" width="2" height="1.5" fill="#a8a8a8"/><rect x="841" y="490.25" width="2" height="1.5" fill="#a8a8a8"/><rect x="841" y="502.25" width="2" height="1.5" fill="#a8a8a8"/><rect x="841" y="514.25" width="2" height="1.5" fill="#a8a8a8"/><rect x="841" y="526.25" width="2" height="1.5" fill="#a8a8a8"/><rect x="841" y="538.25" width="2" height="1.5" fill="#a8a8a8"/><rect x="841" y="550.25" width="2" height="1.5" fill="#a8a8a8"/><rect x="841" y="562.25" width="2" height="1.5" fill="#a8a8a8"/><rect x="841" y="574.25" width="2" height="1.5" fill="#a8a8a8"/><rect x="841" y="586.25" width="2" height="1.5" fill="#a8a8a8"/><rect x="841" y="598.25" width="2" height="1.5" fill="#a8a8a8"/><rect x="841" y="610.25" width="2" height="1.5" fill="#a8a8a8"/><rect x="901" y="34.25" width="2" height="1.5" fill="#a8a8a8"/><rect x="901" y="46.25" width="2" height="1.5" fill="#a8a8a8"/><rect x="901" y="58.25" width="2" height="1.5" fill="#a8a8a8"/><rect x="901" y="70.25" width="2" height="1.5" fill="#a8a8a8"/><rect x="901" y="82.25" width="2" height="1.5" fill="#a8a8a8"/><rect x="901" y="94.25" width="2" height="1.5" fill="#a8a8a8"/><rect x="901" y="106.25" width="2" height="1.5" fill="#a8a8a8"/><rect x="901" y="118.25" width="2" height="1.5" fill="#a8a8a8"/><rect x="901" y="130.25" width="2" height="1.5" fill="#a8a8a8"/><rect x="901" y="142.25" width="2" height="1.5" fill="#a8a8a8"/><rect x="901" y="154.25" width="2" height="1.5" fill="#a8a8a8"/><rect x="901" y="166.25" width="2" height="1.5" fill="#a8a8a8"/><rect x="901" y="178.25" width="2" height="1.5" fill="#a8a8a8"/><rect x="901" y="190.25" width="2" height="1.5" fill="#a8a8a8"/><rect x="901" y="202.25" width="2" height="1.5" fill="#a8a8a8"/><rect x="901" y="214.25" width="2" height="1.5" fill="#a8a8a8"/><rect x="901" y="226.25" width="2" height="1.5" fill="#a8a8a8"/><rect x="901" y="238.25" width="2" height="1.5" fill="#a8a8a8"/><rect x="901" y="250.25" width="2" height="1.5" fill="#a8a8a8"/><rect x="901" y="262.25" width="2" height="1.5" fill="#a8a8a8"/><rect x="901" y="274.25" width="2" height="1.5" fill="#a8a8a8"/><rect x="901" y="286.25" width="2" height="1.5" fill="#a8a8a8"/><rect x="901" y="298.25" width="2" height="1.5" fill="#a8a8a8"/><rect x="901" y="310.25" width="2" height="1.5" fill="#a8a8a8"/><rect x="901" y="322.25" width="2" height="1.5" fill="#a8a8a8"/><rect x="901" y="334.25" width="2" height="1.5" fill="#a8a8a8"/><rect x="901" y="346.25" width="2" height="1.5" fill="#a8a8a8"/><rect x="901" y="358.25" width="2" height="1.5" fill="#a8a8a8"/><rect x="901" y="370.25" width="2" height="1.5" fill="#a8a8a8"/><rect x="901" y="382.25" width="2" height="1.5" fill="#a8a8a8"/><rect x="901" y="394.25" width="2" height="1.5" fill="#a8a8a8"/><rect x="901" y="406.25" width="2" height="1.5" fill="#a8a8a8"/><rect x="901" y="418.25" width="2" height="1.5" fill="#a8a8a8"/><rect x="901" y="430.25" width="2" height="1.5" fill="#a8a8a8"/><rect x="901" y="442.25" width="2" height="1.5" fill="#a8a8a8"/><rect x="901" y="454.25" width="2" height="1.5" fill="#a8a8a8"/><rect x="901" y="466.25" width="2" height="1.5" fill="#a8a8a8"/><rect x="901" y="478.25" width="2" height="1.5" fill="#a8a8a8"/><rect x="901" y="490.25" width="2" height="1.5" fill="#a8a8a8"/><rect x="901" y="502.25" width="2" height="1.5" fill="#a8a8a8"/><rect x="901" y="514.25" width="2" height="1.5" fill="#a8a8a8"/><rect x="901" y="526.25" width="2" height="1.5" fill="#a8a8a8"/><rect x="901" y="538.25" width="2" height="1.5" fill="#a8a8a8"/><rect x="901" y="550.25" width="2" height="1.5" fill="#a8a8a8"/><rect x="901" y="562.25" width="2" height="1.5" fill="#a8a8a8"/><rect x="901" y="574.25" width="2" height="1.5" fill="#a8a8a8"/><rect x="901" y="586.25" width="2" height="1.5" fill="#a8a8a8"/><rect x="901" y="598.25" width="2" height="1.5" fill="#a8a8a8"/><rect x="901" y="610.25" width="2" height="1.5" fill="#a8a8a8"/><rect x="37" y="82.25" width="2" height="1.5" fill="#a8a8a8"/><rect x="49" y="82.25" width="2" height="1.5" fill="#a8a8a8"/><rect x="73" y="82.25" width="2" height="1.5" fill="#a8a8a8"/><rect x="85" y="82.25" width="2" height="1.5" fill="#a8a8a8"/><rect x="97" y="82.25" width="2" height="1.5" fill="#a8a8a8"/><rect x="109" y="82.25" width="2" height="1.5" fill="#a8a8a8"/><rect x="133" y="82.25" width="2" height="1.5" fill="#a8a8a8"/><rect x="145" y="82.25" width="2" height="1.5" fill="#a8a8a8"/><rect x="157" y="82.25" width="2" height="1.5" fill="#a8a8a8"/><rect x="169" y="82.25" width="2" height="1.5" fill="#a8a8a8"/><rect x="193" y="82.25" width="2" height="1.5" fill="#a8a8a8"/><rect x="205" y="82.25" width="2" height="1.5" fill="#a8a8a8"/><rect x="217" y="82.25" width="2" height="1.5" fill="#a8a8a8"/><rect x="229" y="82.25" width="2" height="1.5" fill="#a8a8a8"/><rect x="253" y="82.25" width="2" height="1.5" fill="#a8a8a8"/><rect x="265" y="82.25" width="2" height="1.5" fill="#a8a8a8"/><rect x="277" y="82.25" width="2" height="1.5" fill="#a8a8a8"/><rect x="289" y="82.25" width="2" height="1.5" fill="#a8a8a8"/><rect x="313" y="82.25" width="2" height="1.5" fill="#a8a8a8"/><rect x="325" y="82.25" width="2" height="1.5" fill="#a8a8a8"/><rect x="337" y="82.25" width="2" height="1.5" fill="#a8a8a8"/><rect x="349" y="82.25" width="2" height="1.5" fill="#a8a8a8"/><rect x="373" y="82.25" width="2" height="1.5" fill="#a8a8a8"/><rect x="385" y="82.25" width="2" height="1.5" fill="#a8a8a8"/><rect x="397" y="82.25" width="2" height="1.5" fill="#a8a8a8"/><rect x="409" y="82.25" width="2" height="1.5" fill="#a8a8a8"/><rect x="433" y="82.25" width="2" height="1.5" fill="#a8a8a8"/><rect x="445" y="82.25" width="2" height="1.5" fill="#a8a8a8"/><rect x="457" y="82.25" width="2" height="1.5" fill="#a8a8a8"/><rect x="469" y="82.25" width="2" height="1.5" fill="#a8a8a8"/><rect x="493" y="82.25" width="2" height="1.5" fill="#a8a8a8"/><rect x="505" y="82.25" width="2" height="1.5" fill="#a8a8a8"/><rect x="517" y="82.25" width="2" height="1.5" fill="#a8a8a8"/><rect x="529" y="82.25" width="2" height="1.5" fill="#a8a8a8"/><rect x="553" y="82.25" width="2" height="1.5" fill="#a8a8a8"/><rect x="565" y="82.25" width="2" height="1.5" fill="#a8a8a8"/><rect x="577" y="82.25" width="2" height="1.5" fill="#a8a8a8"/><rect x="589" y="82.25" width="2" height="1.5" fill="#a8a8a8"/><rect x="613" y="82.25" width="2" height="1.5" fill="#a8a8a8"/><rect x="625" y="82.25" width="2" height="1.5" fill="#a8a8a8"/><rect x="637" y="82.25" width="2" height="1.5" fill="#a8a8a8"/><rect x="649" y="82.25" width="2" height="1.5" fill="#a8a8a8"/><rect x="673" y="82.25" width="2" height="1.5" fill="#a8a8a8"/><rect x="685" y="82.25" width="2" height="1.5" fill="#a8a8a8"/><rect x="697" y="82.25" width="2" height="1.5" fill="#a8a8a8"/><rect x="709" y="82.25" width="2" height="1.5" fill="#a8a8a8"/><rect x="733" y="82.25" width="2" height="1.5" fill="#a8a8a8"/><rect x="745" y="82.25" width="2" height="1.5" fill="#a8a8a8"/><rect x="757" y="82.25" width="2" height="1.5" fill="#a8a8a8"/><rect x="769" y="82.25" width="2" height="1.5" fill="#a8a8a8"/><rect x="793" y="82.25" width="2" height="1.5" fill="#a8a8a8"/><rect x="805" y="82.25" width="2" height="1.5" fill="#a8a8a8"/><rect x="817" y="82.25" width="2" height="1.5" fill="#a8a8a8"/><rect x="829" y="82.25" width="2" height="1.5" fill="#a8a8a8"/><rect x="853" y="82.25" width="2" height="1.5" fill="#a8a8a8"/><rect x="865" y="82.25" width="2" height="1.5" fill="#a8a8a8"/><rect x="877" y="82.25" width="2" height="1.5" fill="#a8a8a8"/><rect x="889" y="82.25" width="2" height="1.5" fill="#a8a8a8"/><rect x="913" y="82.25" width="2" height="1.5" fill="#a8a8a8"/><rect x="925" y="82.25" width="2" height="1.5" fill="#a8a8a8"/><rect x="37" y="142.25" width="2" height="1.5" fill="#a8a8a8"/><rect x="49" y="142.25" width="2" height="1.5" fill="#a8a8a8"/><rect x="73" y="142.25" width="2" height="1.5" fill="#a8a8a8"/><rect x="85" y="142.25" width="2" height="1.5" fill="#a8a8a8"/><rect x="97" y="142.25" width="2" height="1.5" fill="#a8a8a8"/><rect x="109" y="142.25" width="2" height="1.5" fill="#a8a8a8"/><rect x="133" y="142.25" width="2" height="1.5" fill="#a8a8a8"/><rect x="145" y="142.25" width="2" height="1.5" fill="#a8a8a8"/><rect x="157" y="142.25" width="2" height="1.5" fill="#a8a8a8"/><rect x="169" y="142.25" width="2" height="1.5" fill="#a8a8a8"/><rect x="193" y="142.25" width="2" height="1.5" fill="#a8a8a8"/><rect x="205" y="142.25" width="2" height="1.5" fill="#a8a8a8"/><rect x="217" y="142.25" width="2" height="1.5" fill="#a8a8a8"/><rect x="229" y="142.25" width="2" height="1.5" fill="#a8a8a8"/><rect x="253" y="142.25" width="2" height="1.5" fill="#a8a8a8"/><rect x="265" y="142.25" width="2" height="1.5" fill="#a8a8a8"/><rect x="277" y="142.25" width="2" height="1.5" fill="#a8a8a8"/><rect x="289" y="142.25" width="2" height="1.5" fill="#a8a8a8"/><rect x="313" y="142.25" width="2" height="1.5" fill="#a8a8a8"/><rect x="325" y="142.25" width="2" height="1.5" fill="#a8a8a8"/><rect x="337" y="142.25" width="2" height="1.5" fill="#a8a8a8"/><rect x="349" y="142.25" width="2" height="1.5" fill="#a8a8a8"/><rect x="373" y="142.25" width="2" height="1.5" fill="#a8a8a8"/><rect x="385" y="142.25" width="2" height="1.5" fill="#a8a8a8"/><rect x="397" y="142.25" width="2" height="1.5" fill="#a8a8a8"/><rect x="409" y="142.25" width="2" height="1.5" fill="#a8a8a8"/><rect x="433" y="142.25" width="2" height="1.5" fill="#a8a8a8"/><rect x="445" y="142.25" width="2" height="1.5" fill="#a8a8a8"/><rect x="457" y="142.25" width="2" height="1.5" fill="#a8a8a8"/><rect x="469" y="142.25" width="2" height="1.5" fill="#a8a8a8"/><rect x="493" y="142.25" width="2" height="1.5" fill="#a8a8a8"/><rect x="505" y="142.25" width="2" height="1.5" fill="#a8a8a8"/><rect x="517" y="142.25" width="2" height="1.5" fill="#a8a8a8"/><rect x="529" y="142.25" width="2" height="1.5" fill="#a8a8a8"/><rect x="553" y="142.25" width="2" height="1.5" fill="#a8a8a8"/><rect x="565" y="142.25" width="2" height="1.5" fill="#a8a8a8"/><rect x="577" y="142.25" width="2" height="1.5" fill="#a8a8a8"/><rect x="589" y="142.25" width="2" height="1.5" fill="#a8a8a8"/><rect x="613" y="142.25" width="2" height="1.5" fill="#a8a8a8"/><rect x="625" y="142.25" width="2" height="1.5" fill="#a8a8a8"/><rect x="637" y="142.25" width="2" height="1.5" fill="#a8a8a8"/><rect x="649" y="142.25" width="2" height="1.5" fill="#a8a8a8"/><rect x="673" y="142.25" width="2" height="1.5" fill="#a8a8a8"/><rect x="685" y="142.25" width="2" height="1.5" fill="#a8a8a8"/><rect x="697" y="142.25" width="2" height="1.5" fill="#a8a8a8"/><rect x="709" y="142.25" width="2" height="1.5" fill="#a8a8a8"/><rect x="733" y="142.25" width="2" height="1.5" fill="#a8a8a8"/><rect x="745" y="142.25" width="2" height="1.5" fill="#a8a8a8"/><rect x="757" y="142.25" width="2" height="1.5" fill="#a8a8a8"/><rect x="769" y="142.25" width="2" height="1.5" fill="#a8a8a8"/><rect x="793" y="142.25" width="2" height="1.5" fill="#a8a8a8"/><rect x="805" y="142.25" width="2" height="1.5" fill="#a8a8a8"/><rect x="817" y="142.25" width="2" height="1.5" fill="#a8a8a8"/><rect x="829" y="142.25" width="2" height="1.5" fill="#a8a8a8"/><rect x="853" y="142.25" width="2" height="1.5" fill="#a8a8a8"/><rect x="865" y="142.25" width="2" height="1.5" fill="#a8a8a8"/><rect x="877" y="142.25" width="2" height="1.5" fill="#a8a8a8"/><rect x="889" y="142.25" width="2" height="1.5" fill="#a8a8a8"/><rect x="913" y="142.25" width="2" height="1.5" fill="#a8a8a8"/><rect x="925" y="142.25" width="2" height="1.5" fill="#a8a8a8"/><rect x="37" y="202.25" width="2" height="1.5" fill="#a8a8a8"/><rect x="49" y="202.25" width="2" height="1.5" fill="#a8a8a8"/><rect x="73" y="202.25" width="2" height="1.5" fill="#a8a8a8"/><rect x="85" y="202.25" width="2" height="1.5" fill="#a8a8a8"/><rect x="97" y="202.25" width="2" height="1.5" fill="#a8a8a8"/><rect x="109" y="202.25" width="2" height="1.5" fill="#a8a8a8"/><rect x="133" y="202.25" width="2" height="1.5" fill="#a8a8a8"/><rect x="145" y="202.25" width="2" height="1.5" fill="#a8a8a8"/><rect x="157" y="202.25" width="2" height="1.5" fill="#a8a8a8"/><rect x="169" y="202.25" width="2" height="1.5" fill="#a8a8a8"/><rect x="193" y="202.25" width="2" height="1.5" fill="#a8a8a8"/><rect x="205" y="202.25" width="2" height="1.5" fill="#a8a8a8"/><rect x="217" y="202.25" width="2" height="1.5" fill="#a8a8a8"/><rect x="229" y="202.25" width="2" height="1.5" fill="#a8a8a8"/><rect x="253" y="202.25" width="2" height="1.5" fill="#a8a8a8"/><rect x="265" y="202.25" width="2" height="1.5" fill="#a8a8a8"/><rect x="277" y="202.25" width="2" height="1.5" fill="#a8a8a8"/><rect x="289" y="202.25" width="2" height="1.5" fill="#a8a8a8"/><rect x="313" y="202.25" width="2" height="1.5" fill="#a8a8a8"/><rect x="325" y="202.25" width="2" height="1.5" fill="#a8a8a8"/><rect x="337" y="202.25" width="2" height="1.5" fill="#a8a8a8"/><rect x="349" y="202.25" width="2" height="1.5" fill="#a8a8a8"/><rect x="373" y="202.25" width="2" height="1.5" fill="#a8a8a8"/><rect x="385" y="202.25" width="2" height="1.5" fill="#a8a8a8"/><rect x="397" y="202.25" width="2" height="1.5" fill="#a8a8a8"/><rect x="409" y="202.25" width="2" height="1.5" fill="#a8a8a8"/><rect x="433" y="202.25" width="2" height="1.5" fill="#a8a8a8"/><rect x="445" y="202.25" width="2" height="1.5" fill="#a8a8a8"/><rect x="457" y="202.25" width="2" height="1.5" fill="#a8a8a8"/><rect x="469" y="202.25" width="2" height="1.5" fill="#a8a8a8"/><rect x="493" y="202.25" width="2" height="1.5" fill="#a8a8a8"/><rect x="505" y="202.25" width="2" height="1.5" fill="#a8a8a8"/><rect x="517" y="202.25" width="2" height="1.5" fill="#a8a8a8"/><rect x="529" y="202.25" width="2" height="1.5" fill="#a8a8a8"/><rect x="553" y="202.25" width="2" height="1.5" fill="#a8a8a8"/><rect x="565" y="202.25" width="2" height="1.5" fill="#a8a8a8"/><rect x="577" y="202.25" width="2" height="1.5" fill="#a8a8a8"/><rect x="589" y="202.25" width="2" height="1.5" fill="#a8a8a8"/><rect x="613" y="202.25" width="2" height="1.5" fill="#a8a8a8"/><rect x="625" y="202.25" width="2" height="1.5" fill="#a8a8a8"/><rect x="637" y="202.25" width="2" height="1.5" fill="#a8a8a8"/><rect x="649" y="202.25" width="2" height="1.5" fill="#a8a8a8"/><rect x="673" y="202.25" width="2" height="1.5" fill="#a8a8a8"/><rect x="685" y="202.25" width="2" height="1.5" fill="#a8a8a8"/><rect x="697" y="202.25" width="2" height="1.5" fill="#a8a8a8"/><rect x="709" y="202.25" width="2" height="1.5" fill="#a8a8a8"/><rect x="733" y="202.25" width="2" height="1.5" fill="#a8a8a8"/><rect x="745" y="202.25" width="2" height="1.5" fill="#a8a8a8"/><rect x="757" y="202.25" width="2" height="1.5" fill="#a8a8a8"/><rect x="769" y="202.25" width="2" height="1.5" fill="#a8a8a8"/><rect x="793" y="202.25" width="2" height="1.5" fill="#a8a8a8"/><rect x="805" y="202.25" width="2" height="1.5" fill="#a8a8a8"/><rect x="817" y="202.25" width="2" height="1.5" fill="#a8a8a8"/><rect x="829" y="202.25" width="2" height="1.5" fill="#a8a8a8"/><rect x="853" y="202.25" width="2" height="1.5" fill="#a8a8a8"/><rect x="865" y="202.25" width="2" height="1.5" fill="#a8a8a8"/><rect x="877" y="202.25" width="2" height="1.5" fill="#a8a8a8"/><rect x="889" y="202.25" width="2" height="1.5" fill="#a8a8a8"/><rect x="913" y="202.25" width="2" height="1.5" fill="#a8a8a8"/><rect x="925" y="202.25" width="2" height="1.5" fill="#a8a8a8"/><rect x="37" y="262.25" width="2" height="1.5" fill="#a8a8a8"/><rect x="49" y="262.25" width="2" height="1.5" fill="#a8a8a8"/><rect x="73" y="262.25" width="2" height="1.5" fill="#a8a8a8"/><rect x="85" y="262.25" width="2" height="1.5" fill="#a8a8a8"/><rect x="97" y="262.25" width="2" height="1.5" fill="#a8a8a8"/><rect x="109" y="262.25" width="2" height="1.5" fill="#a8a8a8"/><rect x="133" y="262.25" width="2" height="1.5" fill="#a8a8a8"/><rect x="145" y="262.25" width="2" height="1.5" fill="#a8a8a8"/><rect x="157" y="262.25" width="2" height="1.5" fill="#a8a8a8"/><rect x="169" y="262.25" width="2" height="1.5" fill="#a8a8a8"/><rect x="193" y="262.25" width="2" height="1.5" fill="#a8a8a8"/><rect x="205" y="262.25" width="2" height="1.5" fill="#a8a8a8"/><rect x="217" y="262.25" width="2" height="1.5" fill="#a8a8a8"/><rect x="229" y="262.25" width="2" height="1.5" fill="#a8a8a8"/><rect x="253" y="262.25" width="2" height="1.5" fill="#a8a8a8"/><rect x="265" y="262.25" width="2" height="1.5" fill="#a8a8a8"/><rect x="277" y="262.25" width="2" height="1.5" fill="#a8a8a8"/><rect x="289" y="262.25" width="2" height="1.5" fill="#a8a8a8"/><rect x="313" y="262.25" width="2" height="1.5" fill="#a8a8a8"/><rect x="325" y="262.25" width="2" height="1.5" fill="#a8a8a8"/><rect x="337" y="262.25" width="2" height="1.5" fill="#a8a8a8"/><rect x="349" y="262.25" width="2" height="1.5" fill="#a8a8a8"/><rect x="373" y="262.25" width="2" height="1.5" fill="#a8a8a8"/><rect x="385" y="262.25" width="2" height="1.5" fill="#a8a8a8"/><rect x="397" y="262.25" width="2" height="1.5" fill="#a8a8a8"/><rect x="409" y="262.25" width="2" height="1.5" fill="#a8a8a8"/><rect x="433" y="262.25" width="2" height="1.5" fill="#a8a8a8"/><rect x="445" y="262.25" width="2" height="1.5" fill="#a8a8a8"/><rect x="457" y="262.25" width="2" height="1.5" fill="#a8a8a8"/><rect x="469" y="262.25" width="2" height="1.5" fill="#a8a8a8"/><rect x="493" y="262.25" width="2" height="1.5" fill="#a8a8a8"/><rect x="505" y="262.25" width="2" height="1.5" fill="#a8a8a8"/><rect x="517" y="262.25" width="2" height="1.5" fill="#a8a8a8"/><rect x="529" y="262.25" width="2" height="1.5" fill="#a8a8a8"/><rect x="553" y="262.25" width="2" height="1.5" fill="#a8a8a8"/><rect x="565" y="262.25" width="2" height="1.5" fill="#a8a8a8"/><rect x="577" y="262.25" width="2" height="1.5" fill="#a8a8a8"/><rect x="589" y="262.25" width="2" height="1.5" fill="#a8a8a8"/><rect x="613" y="262.25" width="2" height="1.5" fill="#a8a8a8"/><rect x="625" y="262.25" width="2" height="1.5" fill="#a8a8a8"/><rect x="637" y="262.25" width="2" height="1.5" fill="#a8a8a8"/><rect x="649" y="262.25" width="2" height="1.5" fill="#a8a8a8"/><rect x="673" y="262.25" width="2" height="1.5" fill="#a8a8a8"/><rect x="685" y="262.25" width="2" height="1.5" fill="#a8a8a8"/><rect x="697" y="262.25" width="2" height="1.5" fill="#a8a8a8"/><rect x="709" y="262.25" width="2" height="1.5" fill="#a8a8a8"/><rect x="733" y="262.25" width="2" height="1.5" fill="#a8a8a8"/><rect x="745" y="262.25" width="2" height="1.5" fill="#a8a8a8"/><rect x="757" y="262.25" width="2" height="1.5" fill="#a8a8a8"/><rect x="769" y="262.25" width="2" height="1.5" fill="#a8a8a8"/><rect x="793" y="262.25" width="2" height="1.5" fill="#a8a8a8"/><rect x="805" y="262.25" width="2" height="1.5" fill="#a8a8a8"/><rect x="817" y="262.25" width="2" height="1.5" fill="#a8a8a8"/><rect x="829" y="262.25" width="2" height="1.5" fill="#a8a8a8"/><rect x="853" y="262.25" width="2" height="1.5" fill="#a8a8a8"/><rect x="865" y="262.25" width="2" height="1.5" fill="#a8a8a8"/><rect x="877" y="262.25" width="2" height="1.5" fill="#a8a8a8"/><rect x="889" y="262.25" width="2" height="1.5" fill="#a8a8a8"/><rect x="913" y="262.25" width="2" height="1.5" fill="#a8a8a8"/><rect x="925" y="262.25" width="2" height="1.5" fill="#a8a8a8"/><rect x="37" y="382.25" width="2" height="1.5" fill="#a8a8a8"/><rect x="49" y="382.25" width="2" height="1.5" fill="#a8a8a8"/><rect x="73" y="382.25" width="2" height="1.5" fill="#a8a8a8"/><rect x="85" y="382.25" width="2" height="1.5" fill="#a8a8a8"/><rect x="97" y="382.25" width="2" height="1.5" fill="#a8a8a8"/><rect x="109" y="382.25" width="2" height="1.5" fill="#a8a8a8"/><rect x="133" y="382.25" width="2" height="1.5" fill="#a8a8a8"/><rect x="145" y="382.25" width="2" height="1.5" fill="#a8a8a8"/><rect x="157" y="382.25" width="2" height="1.5" fill="#a8a8a8"/><rect x="169" y="382.25" width="2" height="1.5" fill="#a8a8a8"/><rect x="193" y="382.25" width="2" height="1.5" fill="#a8a8a8"/><rect x="205" y="382.25" width="2" height="1.5" fill="#a8a8a8"/><rect x="217" y="382.25" width="2" height="1.5" fill="#a8a8a8"/><rect x="229" y="382.25" width="2" height="1.5" fill="#a8a8a8"/><rect x="253" y="382.25" width="2" height="1.5" fill="#a8a8a8"/><rect x="265" y="382.25" width="2" height="1.5" fill="#a8a8a8"/><rect x="277" y="382.25" width="2" height="1.5" fill="#a8a8a8"/><rect x="289" y="382.25" width="2" height="1.5" fill="#a8a8a8"/><rect x="313" y="382.25" width="2" height="1.5" fill="#a8a8a8"/><rect x="325" y="382.25" width="2" height="1.5" fill="#a8a8a8"/><rect x="337" y="382.25" width="2" height="1.5" fill="#a8a8a8"/><rect x="349" y="382.25" width="2" height="1.5" fill="#a8a8a8"/><rect x="373" y="382.25" width="2" height="1.5" fill="#a8a8a8"/><rect x="385" y="382.25" width="2" height="1.5" fill="#a8a8a8"/><rect x="397" y="382.25" width="2" height="1.5" fill="#a8a8a8"/><rect x="409" y="382.25" width="2" height="1.5" fill="#a8a8a8"/><rect x="433" y="382.25" width="2" height="1.5" fill="#a8a8a8"/><rect x="445" y="382.25" width="2" height="1.5" fill="#a8a8a8"/><rect x="457" y="382.25" width="2" height="1.5" fill="#a8a8a8"/><rect x="469" y="382.25" width="2" height="1.5" fill="#a8a8a8"/><rect x="493" y="382.25" width="2" height="1.5" fill="#a8a8a8"/><rect x="505" y="382.25" width="2" height="1.5" fill="#a8a8a8"/><rect x="517" y="382.25" width="2" height="1.5" fill="#a8a8a8"/><rect x="529" y="382.25" width="2" height="1.5" fill="#a8a8a8"/><rect x="553" y="382.25" width="2" height="1.5" fill="#a8a8a8"/><rect x="565" y="382.25" width="2" height="1.5" fill="#a8a8a8"/><rect x="577" y="382.25" width="2" height="1.5" fill="#a8a8a8"/><rect x="589" y="382.25" width="2" height="1.5" fill="#a8a8a8"/><rect x="613" y="382.25" width="2" height="1.5" fill="#a8a8a8"/><rect x="625" y="382.25" width="2" height="1.5" fill="#a8a8a8"/><rect x="637" y="382.25" width="2" height="1.5" fill="#a8a8a8"/><rect x="649" y="382.25" width="2" height="1.5" fill="#a8a8a8"/><rect x="673" y="382.25" width="2" height="1.5" fill="#a8a8a8"/><rect x="685" y="382.25" width="2" height="1.5" fill="#a8a8a8"/><rect x="697" y="382.25" width="2" height="1.5" fill="#a8a8a8"/><rect x="709" y="382.25" width="2" height="1.5" fill="#a8a8a8"/><rect x="733" y="382.25" width="2" height="1.5" fill="#a8a8a8"/><rect x="745" y="382.25" width="2" height="1.5" fill="#a8a8a8"/><rect x="757" y="382.25" width="2" height="1.5" fill="#a8a8a8"/><rect x="769" y="382.25" width="2" height="1.5" fill="#a8a8a8"/><rect x="793" y="382.25" width="2" height="1.5" fill="#a8a8a8"/><rect x="805" y="382.25" width="2" height="1.5" fill="#a8a8a8"/><rect x="817" y="382.25" width="2" height="1.5" fill="#a8a8a8"/><rect x="829" y="382.25" width="2" height="1.5" fill="#a8a8a8"/><rect x="853" y="382.25" width="2" height="1.5" fill="#a8a8a8"/><rect x="865" y="382.25" width="2" height="1.5" fill="#a8a8a8"/><rect x="877" y="382.25" width="2" height="1.5" fill="#a8a8a8"/><rect x="889" y="382.25" width="2" height="1.5" fill="#a8a8a8"/><rect x="913" y="382.25" width="2" height="1.5" fill="#a8a8a8"/><rect x="925" y="382.25" width="2" height="1.5" fill="#a8a8a8"/><rect x="37" y="442.25" width="2" height="1.5" fill="#a8a8a8"/><rect x="49" y="442.25" width="2" height="1.5" fill="#a8a8a8"/><rect x="73" y="442.25" width="2" height="1.5" fill="#a8a8a8"/><rect x="85" y="442.25" width="2" height="1.5" fill="#a8a8a8"/><rect x="97" y="442.25" width="2" height="1.5" fill="#a8a8a8"/><rect x="109" y="442.25" width="2" height="1.5" fill="#a8a8a8"/><rect x="133" y="442.25" width="2" height="1.5" fill="#a8a8a8"/><rect x="145" y="442.25" width="2" height="1.5" fill="#a8a8a8"/><rect x="157" y="442.25" width="2" height="1.5" fill="#a8a8a8"/><rect x="169" y="442.25" width="2" height="1.5" fill="#a8a8a8"/><rect x="193" y="442.25" width="2" height="1.5" fill="#a8a8a8"/><rect x="205" y="442.25" width="2" height="1.5" fill="#a8a8a8"/><rect x="217" y="442.25" width="2" height="1.5" fill="#a8a8a8"/><rect x="229" y="442.25" width="2" height="1.5" fill="#a8a8a8"/><rect x="253" y="442.25" width="2" height="1.5" fill="#a8a8a8"/><rect x="265" y="442.25" width="2" height="1.5" fill="#a8a8a8"/><rect x="277" y="442.25" width="2" height="1.5" fill="#a8a8a8"/><rect x="289" y="442.25" width="2" height="1.5" fill="#a8a8a8"/><rect x="313" y="442.25" width="2" height="1.5" fill="#a8a8a8"/><rect x="325" y="442.25" width="2" height="1.5" fill="#a8a8a8"/><rect x="337" y="442.25" width="2" height="1.5" fill="#a8a8a8"/><rect x="349" y="442.25" width="2" height="1.5" fill="#a8a8a8"/><rect x="373" y="442.25" width="2" height="1.5" fill="#a8a8a8"/><rect x="385" y="442.25" width="2" height="1.5" fill="#a8a8a8"/><rect x="397" y="442.25" width="2" height="1.5" fill="#a8a8a8"/><rect x="409" y="442.25" width="2" height="1.5" fill="#a8a8a8"/><rect x="433" y="442.25" width="2" height="1.5" fill="#a8a8a8"/><rect x="445" y="442.25" width="2" height="1.5" fill="#a8a8a8"/><rect x="457" y="442.25" width="2" height="1.5" fill="#a8a8a8"/><rect x="469" y="442.25" width="2" height="1.5" fill="#a8a8a8"/><rect x="493" y="442.25" width="2" height="1.5" fill="#a8a8a8"/><rect x="505" y="442.25" width="2" height="1.5" fill="#a8a8a8"/><rect x="517" y="442.25" width="2" height="1.5" fill="#a8a8a8"/><rect x="529" y="442.25" width="2" height="1.5" fill="#a8a8a8"/><rect x="553" y="442.25" width="2" height="1.5" fill="#a8a8a8"/><rect x="565" y="442.25" width="2" height="1.5" fill="#a8a8a8"/><rect x="577" y="442.25" width="2" height="1.5" fill="#a8a8a8"/><rect x="589" y="442.25" width="2" height="1.5" fill="#a8a8a8"/><rect x="613" y="442.25" width="2" height="1.5" fill="#a8a8a8"/><rect x="625" y="442.25" width="2" height="1.5" fill="#a8a8a8"/><rect x="637" y="442.25" width="2" height="1.5" fill="#a8a8a8"/><rect x="649" y="442.25" width="2" height="1.5" fill="#a8a8a8"/><rect x="673" y="442.25" width="2" height="1.5" fill="#a8a8a8"/><rect x="685" y="442.25" width="2" height="1.5" fill="#a8a8a8"/><rect x="697" y="442.25" width="2" height="1.5" fill="#a8a8a8"/><rect x="709" y="442.25" width="2" height="1.5" fill="#a8a8a8"/><rect x="733" y="442.25" width="2" height="1.5" fill="#a8a8a8"/><rect x="745" y="442.25" width="2" height="1.5" fill="#a8a8a8"/><rect x="757" y="442.25" width="2" height="1.5" fill="#a8a8a8"/><rect x="769" y="442.25" width="2" height="1.5" fill="#a8a8a8"/><rect x="793" y="442.25" width="2" height="1.5" fill="#a8a8a8"/><rect x="805" y="442.25" width="2" height="1.5" fill="#a8a8a8"/><rect x="817" y="442.25" width="2" height="1.5" fill="#a8a8a8"/><rect x="829" y="442.25" width="2" height="1.5" fill="#a8a8a8"/><rect x="853" y="442.25" width="2" height="1.5" fill="#a8a8a8"/><rect x="865" y="442.25" width="2" height="1.5" fill="#a8a8a8"/><rect x="877" y="442.25" width="2" height="1.5" fill="#a8a8a8"/><rect x="889" y="442.25" width="2" height="1.5" fill="#a8a8a8"/><rect x="913" y="442.25" width="2" height="1.5" fill="#a8a8a8"/><rect x="925" y="442.25" width="2" height="1.5" fill="#a8a8a8"/><rect x="37" y="502.25" width="2" height="1.5" fill="#a8a8a8"/><rect x="49" y="502.25" width="2" height="1.5" fill="#a8a8a8"/><rect x="73" y="502.25" width="2" height="1.5" fill="#a8a8a8"/><rect x="85" y="502.25" width="2" height="1.5" fill="#a8a8a8"/><rect x="97" y="502.25" width="2" height="1.5" fill="#a8a8a8"/><rect x="109" y="502.25" width="2" height="1.5" fill="#a8a8a8"/><rect x="133" y="502.25" width="2" height="1.5" fill="#a8a8a8"/><rect x="145" y="502.25" width="2" height="1.5" fill="#a8a8a8"/><rect x="157" y="502.25" width="2" height="1.5" fill="#a8a8a8"/><rect x="169" y="502.25" width="2" height="1.5" fill="#a8a8a8"/><rect x="193" y="502.25" width="2" height="1.5" fill="#a8a8a8"/><rect x="205" y="502.25" width="2" height="1.5" fill="#a8a8a8"/><rect x="217" y="502.25" width="2" height="1.5" fill="#a8a8a8"/><rect x="229" y="502.25" width="2" height="1.5" fill="#a8a8a8"/><rect x="253" y="502.25" width="2" height="1.5" fill="#a8a8a8"/><rect x="265" y="502.25" width="2" height="1.5" fill="#a8a8a8"/><rect x="277" y="502.25" width="2" height="1.5" fill="#a8a8a8"/><rect x="289" y="502.25" width="2" height="1.5" fill="#a8a8a8"/><rect x="313" y="502.25" width="2" height="1.5" fill="#a8a8a8"/><rect x="325" y="502.25" width="2" height="1.5" fill="#a8a8a8"/><rect x="337" y="502.25" width="2" height="1.5" fill="#a8a8a8"/><rect x="349" y="502.25" width="2" height="1.5" fill="#a8a8a8"/><rect x="373" y="502.25" width="2" height="1.5" fill="#a8a8a8"/><rect x="385" y="502.25" width="2" height="1.5" fill="#a8a8a8"/><rect x="397" y="502.25" width="2" height="1.5" fill="#a8a8a8"/><rect x="409" y="502.25" width="2" height="1.5" fill="#a8a8a8"/><rect x="433" y="502.25" width="2" height="1.5" fill="#a8a8a8"/><rect x="445" y="502.25" width="2" height="1.5" fill="#a8a8a8"/><rect x="457" y="502.25" width="2" height="1.5" fill="#a8a8a8"/><rect x="469" y="502.25" width="2" height="1.5" fill="#a8a8a8"/><rect x="493" y="502.25" width="2" height="1.5" fill="#a8a8a8"/><rect x="505" y="502.25" width="2" height="1.5" fill="#a8a8a8"/><rect x="517" y="502.25" width="2" height="1.5" fill="#a8a8a8"/><rect x="529" y="502.25" width="2" height="1.5" fill="#a8a8a8"/><rect x="553" y="502.25" width="2" height="1.5" fill="#a8a8a8"/><rect x="565" y="502.25" width="2" height="1.5" fill="#a8a8a8"/><rect x="577" y="502.25" width="2" height="1.5" fill="#a8a8a8"/><rect x="589" y="502.25" width="2" height="1.5" fill="#a8a8a8"/><rect x="613" y="502.25" width="2" height="1.5" fill="#a8a8a8"/><rect x="625" y="502.25" width="2" height="1.5" fill="#a8a8a8"/><rect x="637" y="502.25" width="2" height="1.5" fill="#a8a8a8"/><rect x="649" y="502.25" width="2" height="1.5" fill="#a8a8a8"/><rect x="673" y="502.25" width="2" height="1.5" fill="#a8a8a8"/><rect x="685" y="502.25" width="2" height="1.5" fill="#a8a8a8"/><rect x="697" y="502.25" width="2" height="1.5" fill="#a8a8a8"/><rect x="709" y="502.25" width="2" height="1.5" fill="#a8a8a8"/><rect x="733" y="502.25" width="2" height="1.5" fill="#a8a8a8"/><rect x="745" y="502.25" width="2" height="1.5" fill="#a8a8a8"/><rect x="757" y="502.25" width="2" height="1.5" fill="#a8a8a8"/><rect x="769" y="502.25" width="2" height="1.5" fill="#a8a8a8"/><rect x="793" y="502.25" width="2" height="1.5" fill="#a8a8a8"/><rect x="805" y="502.25" width="2" height="1.5" fill="#a8a8a8"/><rect x="817" y="502.25" width="2" height="1.5" fill="#a8a8a8"/><rect x="829" y="502.25" width="2" height="1.5" fill="#a8a8a8"/><rect x="853" y="502.25" width="2" height="1.5" fill="#a8a8a8"/><rect x="865" y="502.25" width="2" height="1.5" fill="#a8a8a8"/><rect x="877" y="502.25" width="2" height="1.5" fill="#a8a8a8"/><rect x="889" y="502.25" width="2" height="1.5" fill="#a8a8a8"/><rect x="913" y="502.25" width="2" height="1.5" fill="#a8a8a8"/><rect x="925" y="502.25" width="2" height="1.5" fill="#a8a8a8"/><rect x="37" y="562.25" width="2" height="1.5" fill="#a8a8a8"/><rect x="49" y="562.25" width="2" height="1.5" fill="#a8a8a8"/><rect x="73" y="562.25" width="2" height="1.5" fill="#a8a8a8"/><rect x="85" y="562.25" width="2" height="1.5" fill="#a8a8a8"/><rect x="97" y="562.25" width="2" height="1.5" fill="#a8a8a8"/><rect x="109" y="562.25" width="2" height="1.5" fill="#a8a8a8"/><rect x="133" y="562.25" width="2" height="1.5" fill="#a8a8a8"/><rect x="145" y="562.25" width="2" height="1.5" fill="#a8a8a8"/><rect x="157" y="562.25" width="2" height="1.5" fill="#a8a8a8"/><rect x="169" y="562.25" width="2" height="1.5" fill="#a8a8a8"/><rect x="193" y="562.25" width="2" height="1.5" fill="#a8a8a8"/><rect x="205" y="562.25" width="2" height="1.5" fill="#a8a8a8"/><rect x="217" y="562.25" width="2" height="1.5" fill="#a8a8a8"/><rect x="229" y="562.25" width="2" height="1.5" fill="#a8a8a8"/><rect x="253" y="562.25" width="2" height="1.5" fill="#a8a8a8"/><rect x="265" y="562.25" width="2" height="1.5" fill="#a8a8a8"/><rect x="277" y="562.25" width="2" height="1.5" fill="#a8a8a8"/><rect x="289" y="562.25" width="2" height="1.5" fill="#a8a8a8"/><rect x="313" y="562.25" width="2" height="1.5" fill="#a8a8a8"/><rect x="325" y="562.25" width="2" height="1.5" fill="#a8a8a8"/><rect x="337" y="562.25" width="2" height="1.5" fill="#a8a8a8"/><rect x="349" y="562.25" width="2" height="1.5" fill="#a8a8a8"/><rect x="373" y="562.25" width="2" height="1.5" fill="#a8a8a8"/><rect x="385" y="562.25" width="2" height="1.5" fill="#a8a8a8"/><rect x="397" y="562.25" width="2" height="1.5" fill="#a8a8a8"/><rect x="409" y="562.25" width="2" height="1.5" fill="#a8a8a8"/><rect x="433" y="562.25" width="2" height="1.5" fill="#a8a8a8"/><rect x="445" y="562.25" width="2" height="1.5" fill="#a8a8a8"/><rect x="457" y="562.25" width="2" height="1.5" fill="#a8a8a8"/><rect x="469" y="562.25" width="2" height="1.5" fill="#a8a8a8"/><rect x="493" y="562.25" width="2" height="1.5" fill="#a8a8a8"/><rect x="505" y="562.25" width="2" height="1.5" fill="#a8a8a8"/><rect x="517" y="562.25" width="2" height="1.5" fill="#a8a8a8"/><rect x="529" y="562.25" width="2" height="1.5" fill="#a8a8a8"/><rect x="553" y="562.25" width="2" height="1.5" fill="#a8a8a8"/><rect x="565" y="562.25" width="2" height="1.5" fill="#a8a8a8"/><rect x="577" y="562.25" width="2" height="1.5" fill="#a8a8a8"/><rect x="589" y="562.25" width="2" height="1.5" fill="#a8a8a8"/><rect x="613" y="562.25" width="2" height="1.5" fill="#a8a8a8"/><rect x="625" y="562.25" width="2" height="1.5" fill="#a8a8a8"/><rect x="637" y="562.25" width="2" height="1.5" fill="#a8a8a8"/><rect x="649" y="562.25" width="2" height="1.5" fill="#a8a8a8"/><rect x="673" y="562.25" width="2" height="1.5" fill="#a8a8a8"/><rect x="685" y="562.25" width="2" height="1.5" fill="#a8a8a8"/><rect x="697" y="562.25" width="2" height="1.5" fill="#a8a8a8"/><rect x="709" y="562.25" width="2" height="1.5" fill="#a8a8a8"/><rect x="733" y="562.25" width="2" height="1.5" fill="#a8a8a8"/><rect x="745" y="562.25" width="2" height="1.5" fill="#a8a8a8"/><rect x="757" y="562.25" width="2" height="1.5" fill="#a8a8a8"/><rect x="769" y="562.25" width="2" height="1.5" fill="#a8a8a8"/><rect x="793" y="562.25" width="2" height="1.5" fill="#a8a8a8"/><rect x="805" y="562.25" width="2" height="1.5" fill="#a8a8a8"/><rect x="817" y="562.25" width="2" height="1.5" fill="#a8a8a8"/><rect x="829" y="562.25" width="2" height="1.5" fill="#a8a8a8"/><rect x="853" y="562.25" width="2" height="1.5" fill="#a8a8a8"/><rect x="865" y="562.25" width="2" height="1.5" fill="#a8a8a8"/><rect x="877" y="562.25" width="2" height="1.5" fill="#a8a8a8"/><rect x="889" y="562.25" width="2" height="1.5" fill="#a8a8a8"/><rect x="913" y="562.25" width="2" height="1.5" fill="#a8a8a8"/><rect x="925" y="562.25" width="2" height="1.5" fill="#a8a8a8"/><rect x="37.2" y="25" width="1.7" height="3" fill="#e8e8e8"/><rect x="37.2" y="618" width="1.7" height="3" fill="#e8e8e8"/><rect x="49.2" y="25" width="1.7" height="3" fill="#e8e8e8"/><rect x="49.2" y="618" width="1.7" height="3" fill="#e8e8e8"/><rect x="61.2" y="25" width="1.7" height="6" fill="#e8e8e8"/><rect x="61.2" y="615" width="1.7" height="6" fill="#e8e8e8"/><rect x="73.2" y="25" width="1.7" height="3" fill="#e8e8e8"/><rect x="73.2" y="618" width="1.7" height="3" fill="#e8e8e8"/><rect x="85.2" y="25" width="1.7" height="3" fill="#e8e8e8"/><rect x="85.2" y="618" width="1.7" height="3" fill="#e8e8e8"/><rect x="97.2" y="25" width="1.7" height="3" fill="#e8e8e8"/><rect x="97.2" y="618" width="1.7" height="3" fill="#e8e8e8"/><rect x="109.2" y="25" width="1.7" height="3" fill="#e8e8e8"/><rect x="109.2" y="618" width="1.7" height="3" fill="#e8e8e8"/><rect x="121.2" y="25" width="1.7" height="6" fill="#e8e8e8"/><rect x="121.2" y="615" width="1.7" height="6" fill="#e8e8e8"/><rect x="133.2" y="25" width="1.7" height="3" fill="#e8e8e8"/><rect x="133.2" y="618" width="1.7" height="3" fill="#e8e8e8"/><rect x="145.2" y="25" width="1.7" height="3" fill="#e8e8e8"/><rect x="145.2" y="618" width="1.7" height="3" fill="#e8e8e8"/><rect x="157.2" y="25" width="1.7" height="3" fill="#e8e8e8"/><rect x="157.2" y="618" width="1.7" height="3" fill="#e8e8e8"/><rect x="169.2" y="25" width="1.7" height="3" fill="#e8e8e8"/><rect x="169.2" y="618" width="1.7" height="3" fill="#e8e8e8"/><rect x="181.2" y="25" width="1.7" height="6" fill="#e8e8e8"/><rect x="181.2" y="615" width="1.7" height="6" fill="#e8e8e8"/><rect x="193.2" y="25" width="1.7" height="3" fill="#e8e8e8"/><rect x="193.2" y="618" width="1.7" height="3" fill="#e8e8e8"/><rect x="205.2" y="25" width="1.7" height="3" fill="#e8e8e8"/><rect x="205.2" y="618" width="1.7" height="3" fill="#e8e8e8"/><rect x="217.2" y="25" width="1.7" height="3" fill="#e8e8e8"/><rect x="217.2" y="618" width="1.7" height="3" fill="#e8e8e8"/><rect x="229.2" y="25" width="1.7" height="3" fill="#e8e8e8"/><rect x="229.2" y="618" width="1.7" height="3" fill="#e8e8e8"/><rect x="241.2" y="25" width="1.7" height="6" fill="#e8e8e8"/><rect x="241.2" y="615" width="1.7" height="6" fill="#e8e8e8"/><rect x="253.2" y="25" width="1.7" height="3" fill="#e8e8e8"/><rect x="253.2" y="618" width="1.7" height="3" fill="#e8e8e8"/><rect x="265.2" y="25" width="1.7" height="3" fill="#e8e8e8"/><rect x="265.2" y="618" width="1.7" height="3" fill="#e8e8e8"/><rect x="277.2" y="25" width="1.7" height="3" fill="#e8e8e8"/><rect x="277.2" y="618" width="1.7" height="3" fill="#e8e8e8"/><rect x="289.2" y="25" width="1.7" height="3" fill="#e8e8e8"/><rect x="289.2" y="618" width="1.7" height="3" fill="#e8e8e8"/><rect x="301.2" y="25" width="1.7" height="6" fill="#e8e8e8"/><rect x="301.2" y="615" width="1.7" height="6" fill="#e8e8e8"/><rect x="313.2" y="25" width="1.7" height="3" fill="#e8e8e8"/><rect x="313.2" y="618" width="1.7" height="3" fill="#e8e8e8"/><rect x="325.2" y="25" width="1.7" height="3" fill="#e8e8e8"/><rect x="325.2" y="618" width="1.7" height="3" fill="#e8e8e8"/><rect x="337.2" y="25" width="1.7" height="3" fill="#e8e8e8"/><rect x="337.2" y="618" width="1.7" height="3" fill="#e8e8e8"/><rect x="349.2" y="25" width="1.7" height="3" fill="#e8e8e8"/><rect x="349.2" y="618" width="1.7" height="3" fill="#e8e8e8"/><rect x="361.2" y="25" width="1.7" height="6" fill="#e8e8e8"/><rect x="361.2" y="615" width="1.7" height="6" fill="#e8e8e8"/><rect x="373.2" y="25" width="1.7" height="3" fill="#e8e8e8"/><rect x="373.2" y="618" width="1.7" height="3" fill="#e8e8e8"/><rect x="385.2" y="25" width="1.7" height="3" fill="#e8e8e8"/><rect x="385.2" y="618" width="1.7" height="3" fill="#e8e8e8"/><rect x="397.2" y="25" width="1.7" height="3" fill="#e8e8e8"/><rect x="397.2" y="618" width="1.7" height="3" fill="#e8e8e8"/><rect x="409.2" y="25" width="1.7" height="3" fill="#e8e8e8"/><rect x="409.2" y="618" width="1.7" height="3" fill="#e8e8e8"/><rect x="421.2" y="25" width="1.7" height="6" fill="#e8e8e8"/><rect x="421.2" y="615" width="1.7" height="6" fill="#e8e8e8"/><rect x="433.2" y="25" width="1.7" height="3" fill="#e8e8e8"/><rect x="433.2" y="618" width="1.7" height="3" fill="#e8e8e8"/><rect x="445.2" y="25" width="1.7" height="3" fill="#e8e8e8"/><rect x="445.2" y="618" width="1.7" height="3" fill="#e8e8e8"/><rect x="457.2" y="25" width="1.7" height="3" fill="#e8e8e8"/><rect x="457.2" y="618" width="1.7" height="3" fill="#e8e8e8"/><rect x="469.2" y="25" width="1.7" height="3" fill="#e8e8e8"/><rect x="469.2" y="618" width="1.7" height="3" fill="#e8e8e8"/><rect x="481.2" y="25" width="1.7" height="6" fill="#e8e8e8"/><rect x="481.2" y="615" width="1.7" height="6" fill="#e8e8e8"/><rect x="493.2" y="25" width="1.7" height="3" fill="#e8e8e8"/><rect x="493.2" y="618" width="1.7" height="3" fill="#e8e8e8"/><rect x="505.2" y="25" width="1.7" height="3" fill="#e8e8e8"/><rect x="505.2" y="618" width="1.7" height="3" fill="#e8e8e8"/><rect x="517.2" y="25" width="1.7" height="3" fill="#e8e8e8"/><rect x="517.2" y="618" width="1.7" height="3" fill="#e8e8e8"/><rect x="529.2" y="25" width="1.7" height="3" fill="#e8e8e8"/><rect x="529.2" y="618" width="1.7" height="3" fill="#e8e8e8"/><rect x="541.2" y="25" width="1.7" height="6" fill="#e8e8e8"/><rect x="541.2" y="615" width="1.7" height="6" fill="#e8e8e8"/><rect x="553.2" y="25" width="1.7" height="3" fill="#e8e8e8"/><rect x="553.2" y="618" width="1.7" height="3" fill="#e8e8e8"/><rect x="565.2" y="25" width="1.7" height="3" fill="#e8e8e8"/><rect x="565.2" y="618" width="1.7" height="3" fill="#e8e8e8"/><rect x="577.2" y="25" width="1.7" height="3" fill="#e8e8e8"/><rect x="577.2" y="618" width="1.7" height="3" fill="#e8e8e8"/><rect x="589.2" y="25" width="1.7" height="3" fill="#e8e8e8"/><rect x="589.2" y="618" width="1.7" height="3" fill="#e8e8e8"/><rect x="601.2" y="25" width="1.7" height="6" fill="#e8e8e8"/><rect x="601.2" y="615" width="1.7" height="6" fill="#e8e8e8"/><rect x="613.2" y="25" width="1.7" height="3" fill="#e8e8e8"/><rect x="613.2" y="618" width="1.7" height="3" fill="#e8e8e8"/><rect x="625.2" y="25" width="1.7" height="3" fill="#e8e8e8"/><rect x="625.2" y="618" width="1.7" height="3" fill="#e8e8e8"/><rect x="637.2" y="25" width="1.7" height="3" fill="#e8e8e8"/><rect x="637.2" y="618" width="1.7" height="3" fill="#e8e8e8"/><rect x="649.2" y="25" width="1.7" height="3" fill="#e8e8e8"/><rect x="649.2" y="618" width="1.7" height="3" fill="#e8e8e8"/><rect x="661.2" y="25" width="1.7" height="6" fill="#e8e8e8"/><rect x="661.2" y="615" width="1.7" height="6" fill="#e8e8e8"/><rect x="673.2" y="25" width="1.7" height="3" fill="#e8e8e8"/><rect x="673.2" y="618" width="1.7" height="3" fill="#e8e8e8"/><rect x="685.2" y="25" width="1.7" height="3" fill="#e8e8e8"/><rect x="685.2" y="618" width="1.7" height="3" fill="#e8e8e8"/><rect x="697.2" y="25" width="1.7" height="3" fill="#e8e8e8"/><rect x="697.2" y="618" width="1.7" height="3" fill="#e8e8e8"/><rect x="709.2" y="25" width="1.7" height="3" fill="#e8e8e8"/><rect x="709.2" y="618" width="1.7" height="3" fill="#e8e8e8"/><rect x="721.2" y="25" width="1.7" height="6" fill="#e8e8e8"/><rect x="721.2" y="615" width="1.7" height="6" fill="#e8e8e8"/><rect x="733.2" y="25" width="1.7" height="3" fill="#e8e8e8"/><rect x="733.2" y="618" width="1.7" height="3" fill="#e8e8e8"/><rect x="745.2" y="25" width="1.7" height="3" fill="#e8e8e8"/><rect x="745.2" y="618" width="1.7" height="3" fill="#e8e8e8"/><rect x="757.2" y="25" width="1.7" height="3" fill="#e8e8e8"/><rect x="757.2" y="618" width="1.7" height="3" fill="#e8e8e8"/><rect x="769.2" y="25" width="1.7" height="3" fill="#e8e8e8"/><rect x="769.2" y="618" width="1.7" height="3" fill="#e8e8e8"/><rect x="781.2" y="25" width="1.7" height="6" fill="#e8e8e8"/><rect x="781.2" y="615" width="1.7" height="6" fill="#e8e8e8"/><rect x="793.2" y="25" width="1.7" height="3" fill="#e8e8e8"/><rect x="793.2" y="618" width="1.7" height="3" fill="#e8e8e8"/><rect x="805.2" y="25" width="1.7" height="3" fill="#e8e8e8"/><rect x="805.2" y="618" width="1.7" height="3" fill="#e8e8e8"/><rect x="817.2" y="25" width="1.7" height="3" fill="#e8e8e8"/><rect x="817.2" y="618" width="1.7" height="3" fill="#e8e8e8"/><rect x="829.2" y="25" width="1.7" height="3" fill="#e8e8e8"/><rect x="829.2" y="618" width="1.7" height="3" fill="#e8e8e8"/><rect x="841.2" y="25" width="1.7" height="6" fill="#e8e8e8"/><rect x="841.2" y="615" width="1.7" height="6" fill="#e8e8e8"/><rect x="853.2" y="25" width="1.7" height="3" fill="#e8e8e8"/><rect x="853.2" y="618" width="1.7" height="3" fill="#e8e8e8"/><rect x="865.2" y="25" width="1.7" height="3" fill="#e8e8e8"/><rect x="865.2" y="618" width="1.7" height="3" fill="#e8e8e8"/><rect x="877.2" y="25" width="1.7" height="3" fill="#e8e8e8"/><rect x="877.2" y="618" width="1.7" height="3" fill="#e8e8e8"/><rect x="889.2" y="25" width="1.7" height="3" fill="#e8e8e8"/><rect x="889.2" y="618" width="1.7" height="3" fill="#e8e8e8"/><rect x="901.2" y="25" width="1.7" height="6" fill="#e8e8e8"/><rect x="901.2" y="615" width="1.7" height="6" fill="#e8e8e8"/><rect x="913.2" y="25" width="1.7" height="3" fill="#e8e8e8"/><rect x="913.2" y="618" width="1.7" height="3" fill="#e8e8e8"/><rect x="925.2" y="25" width="1.7" height="3" fill="#e8e8e8"/><rect x="925.2" y="618" width="1.7" height="3" fill="#e8e8e8"/><rect x="26" y="34.2" width="4" height="1.7" fill="#e8e8e8"/><rect x="930" y="34.2" width="4" height="1.7" fill="#e8e8e8"/><rect x="26" y="46.2" width="4" height="1.7" fill="#e8e8e8"/><rect x="930" y="46.2" width="4" height="1.7" fill="#e8e8e8"/><rect x="26" y="58.2" width="4" height="1.7" fill="#e8e8e8"/><rect x="930" y="58.2" width="4" height="1.7" fill="#e8e8e8"/><rect x="26" y="70.2" width="4" height="1.7" fill="#e8e8e8"/><rect x="930" y="70.2" width="4" height="1.7" fill="#e8e8e8"/><rect x="26" y="82.2" width="7" height="1.7" fill="#e8e8e8"/><rect x="927" y="82.2" width="7" height="1.7" fill="#e8e8e8"/><rect x="26" y="94.2" width="4" height="1.7" fill="#e8e8e8"/><rect x="930" y="94.2" width="4" height="1.7" fill="#e8e8e8"/><rect x="26" y="106.2" width="4" height="1.7" fill="#e8e8e8"/><rect x="930" y="106.2" width="4" height="1.7" fill="#e8e8e8"/><rect x="26" y="118.2" width="4" height="1.7" fill="#e8e8e8"/><rect x="930" y="118.2" width="4" height="1.7" fill="#e8e8e8"/><rect x="26" y="130.2" width="4" height="1.7" fill="#e8e8e8"/><rect x="930" y="130.2" width="4" height="1.7" fill="#e8e8e8"/><rect x="26" y="142.2" width="7" height="1.7" fill="#e8e8e8"/><rect x="927" y="142.2" width="7" height="1.7" fill="#e8e8e8"/><rect x="26" y="154.2" width="4" height="1.7" fill="#e8e8e8"/><rect x="930" y="154.2" width="4" height="1.7" fill="#e8e8e8"/><rect x="26" y="166.2" width="4" height="1.7" fill="#e8e8e8"/><rect x="930" y="166.2" width="4" height="1.7" fill="#e8e8e8"/><rect x="26" y="178.2" width="4" height="1.7" fill="#e8e8e8"/><rect x="930" y="178.2" width="4" height="1.7" fill="#e8e8e8"/><rect x="26" y="190.2" width="4" height="1.7" fill="#e8e8e8"/><rect x="930" y="190.2" width="4" height="1.7" fill="#e8e8e8"/><rect x="26" y="202.2" width="7" height="1.7" fill="#e8e8e8"/><rect x="927" y="202.2" width="7" height="1.7" fill="#e8e8e8"/><rect x="26" y="214.2" width="4" height="1.7" fill="#e8e8e8"/><rect x="930" y="214.2" width="4" height="1.7" fill="#e8e8e8"/><rect x="26" y="226.2" width="4" height="1.7" fill="#e8e8e8"/><rect x="930" y="226.2" width="4" height="1.7" fill="#e8e8e8"/><rect x="26" y="238.2" width="4" height="1.7" fill="#e8e8e8"/><rect x="930" y="238.2" width="4" height="1.7" fill="#e8e8e8"/><rect x="26" y="250.2" width="4" height="1.7" fill="#e8e8e8"/><rect x="930" y="250.2" width="4" height="1.7" fill="#e8e8e8"/><rect x="26" y="262.2" width="7" height="1.7" fill="#e8e8e8"/><rect x="927" y="262.2" width="7" height="1.7" fill="#e8e8e8"/><rect x="26" y="274.2" width="4" height="1.7" fill="#e8e8e8"/><rect x="930" y="274.2" width="4" height="1.7" fill="#e8e8e8"/><rect x="26" y="286.2" width="4" height="1.7" fill="#e8e8e8"/><rect x="930" y="286.2" width="4" height="1.7" fill="#e8e8e8"/><rect x="26" y="298.2" width="4" height="1.7" fill="#e8e8e8"/><rect x="930" y="298.2" width="4" height="1.7" fill="#e8e8e8"/><rect x="26" y="310.2" width="4" height="1.7" fill="#e8e8e8"/><rect x="930" y="310.2" width="4" height="1.7" fill="#e8e8e8"/><rect x="26" y="322.2" width="7" height="1.7" fill="#e8e8e8"/><rect x="927" y="322.2" width="7" height="1.7" fill="#e8e8e8"/><rect x="26" y="334.2" width="4" height="1.7" fill="#e8e8e8"/><rect x="930" y="334.2" width="4" height="1.7" fill="#e8e8e8"/><rect x="26" y="346.2" width="4" height="1.7" fill="#e8e8e8"/><rect x="930" y="346.2" width="4" height="1.7" fill="#e8e8e8"/><rect x="26" y="358.2" width="4" height="1.7" fill="#e8e8e8"/><rect x="930" y="358.2" width="4" height="1.7" fill="#e8e8e8"/><rect x="26" y="370.2" width="4" height="1.7" fill="#e8e8e8"/><rect x="930" y="370.2" width="4" height="1.7" fill="#e8e8e8"/><rect x="26" y="382.2" width="7" height="1.7" fill="#e8e8e8"/><rect x="927" y="382.2" width="7" height="1.7" fill="#e8e8e8"/><rect x="26" y="394.2" width="4" height="1.7" fill="#e8e8e8"/><rect x="930" y="394.2" width="4" height="1.7" fill="#e8e8e8"/><rect x="26" y="406.2" width="4" height="1.7" fill="#e8e8e8"/><rect x="930" y="406.2" width="4" height="1.7" fill="#e8e8e8"/><rect x="26" y="418.2" width="4" height="1.7" fill="#e8e8e8"/><rect x="930" y="418.2" width="4" height="1.7" fill="#e8e8e8"/><rect x="26" y="430.2" width="4" height="1.7" fill="#e8e8e8"/><rect x="930" y="430.2" width="4" height="1.7" fill="#e8e8e8"/><rect x="26" y="442.2" width="7" height="1.7" fill="#e8e8e8"/><rect x="927" y="442.2" width="7" height="1.7" fill="#e8e8e8"/><rect x="26" y="454.2" width="4" height="1.7" fill="#e8e8e8"/><rect x="930" y="454.2" width="4" height="1.7" fill="#e8e8e8"/><rect x="26" y="466.2" width="4" height="1.7" fill="#e8e8e8"/><rect x="930" y="466.2" width="4" height="1.7" fill="#e8e8e8"/><rect x="26" y="478.2" width="4" height="1.7" fill="#e8e8e8"/><rect x="930" y="478.2" width="4" height="1.7" fill="#e8e8e8"/><rect x="26" y="490.2" width="4" height="1.7" fill="#e8e8e8"/><rect x="930" y="490.2" width="4" height="1.7" fill="#e8e8e8"/><rect x="26" y="502.2" width="7" height="1.7" fill="#e8e8e8"/><rect x="927" y="502.2" width="7" height="1.7" fill="#e8e8e8"/><rect x="26" y="514.2" width="4" height="1.7" fill="#e8e8e8"/><rect x="930" y="514.2" width="4" height="1.7" fill="#e8e8e8"/><rect x="26" y="526.2" width="4" height="1.7" fill="#e8e8e8"/><rect x="930" y="526.2" width="4" height="1.7" fill="#e8e8e8"/><rect x="26" y="538.2" width="4" height="1.7" fill="#e8e8e8"/><rect x="930" y="538.2" width="4" height="1.7" fill="#e8e8e8"/><rect x="26" y="550.2" width="4" height="1.7" fill="#e8e8e8"/><rect x="930" y="550.2" width="4" height="1.7" fill="#e8e8e8"/><rect x="26" y="562.2" width="7" height="1.7" fill="#e8e8e8"/><rect x="927" y="562.2" width="7" height="1.7" fill="#e8e8e8"/><rect x="26" y="574.2" width="4" height="1.7" fill="#e8e8e8"/><rect x="930" y="574.2" width="4" height="1.7" fill="#e8e8e8"/><rect x="26" y="586.2" width="4" height="1.7" fill="#e8e8e8"/><rect x="930" y="586.2" width="4" height="1.7" fill="#e8e8e8"/><rect x="26" y="598.2" width="4" height="1.7" fill="#e8e8e8"/><rect x="930" y="598.2" width="4" height="1.7" fill="#e8e8e8"/><rect x="26" y="610.2" width="4" height="1.7" fill="#e8e8e8"/><rect x="930" y="610.2" width="4" height="1.7" fill="#e8e8e8"/><rect x="25" y="24" width="910" height="598" fill="none" stroke="#f4f4f4" stroke-width="2"/><path d="M195 323.6 V312 H205 V323.6" fill="none" stroke="#f4f000" stroke-width="1.8"/><path d="M504.5 323.6 V312 H512 V323.6" fill="none" stroke="#f4f000" stroke-width="1.8"/><path d="M811.5 323.6 V312 H819 V323.6" fill="none" stroke="#f4f000" stroke-width="1.8"/><rect x="26" y="322.3" width="169" height="2.6" fill="#f4f000"/><rect x="205" y="322.3" width="299.5" height="2.6" fill="#f4f000"/><rect x="512" y="322.3" width="299.5" height="2.6" fill="#f4f000"/><rect x="819" y="322.3" width="115" height="2.6" fill="#f4f000"/><rect x="27" y="323.6" width="1.3" height="3" fill="#f4f000"/><rect x="29" y="323.6" width="1.3" height="4" fill="#f4f000"/><rect x="30" y="320.6" width="1.3" height="3" fill="#f4f000"/><rect x="33" y="323.6" width="1.3" height="3" fill="#f4f000"/><rect x="35" y="323.6" width="1.3" height="4" fill="#f4f000"/><rect x="39" y="323.6" width="1.3" height="3" fill="#f4f000"/><rect x="46" y="323.6" width="1.3" height="3" fill="#f4f000"/><rect x="47" y="320.6" width="1.3" height="3" fill="#f4f000"/><rect x="49" y="323.6" width="1.3" height="4" fill="#f4f000"/><rect x="50" y="320.1" width="1.3" height="3" fill="#f4f000"/><rect x="53" y="323.6" width="1.3" height="3" fill="#f4f000"/><rect x="54" y="320.6" width="1.3" height="3" fill="#f4f000"/><rect x="56" y="323.6" width="1.3" height="4" fill="#f4f000"/><rect x="57" y="320.6" width="1.3" height="3" fill="#f4f000"/><rect x="60" y="323.6" width="1.3" height="4" fill="#f4f000"/><rect x="63" y="323.6" width="1.3" height="3.5" fill="#f4f000"/><rect x="65" y="323.6" width="1.3" height="4" fill="#f4f000"/><rect x="67" y="323.6" width="1.3" height="4" fill="#f4f000"/><rect x="70" y="323.6" width="1.3" height="3.5" fill="#f4f000"/><rect x="72" y="323.6" width="1.3" height="3.5" fill="#f4f000"/><rect x="73" y="320.1" width="1.3" height="3" fill="#f4f000"/><rect x="76" y="323.6" width="1.3" height="4" fill="#f4f000"/><rect x="79" y="323.6" width="1.3" height="3.5" fill="#f4f000"/><rect x="83" y="323.6" width="1.3" height="3" fill="#f4f000"/><rect x="86" y="323.6" width="1.3" height="4" fill="#f4f000"/><rect x="87" y="320.1" width="1.3" height="3" fill="#f4f000"/><rect x="93" y="323.6" width="1.3" height="4" fill="#f4f000"/><rect x="96" y="323.6" width="1.3" height="4" fill="#f4f000"/><rect x="97" y="320.6" width="1.3" height="3" fill="#f4f000"/><rect x="98" y="323.6" width="1.3" height="3" fill="#f4f000"/><rect x="101" y="323.6" width="1.3" height="3.5" fill="#f4f000"/><rect x="102" y="320.1" width="1.3" height="3" fill="#f4f000"/><rect x="104" y="323.6" width="1.3" height="3" fill="#f4f000"/><rect x="108" y="323.6" width="1.3" height="3.5" fill="#f4f000"/><rect x="112" y="320.6" width="1.3" height="3" fill="#f4f000"/><rect x="113" y="323.6" width="1.3" height="3" fill="#f4f000"/><rect x="114" y="320.6" width="1.3" height="3" fill="#f4f000"/><rect x="116" y="323.6" width="1.3" height="3" fill="#f4f000"/><rect x="119" y="323.6" width="1.3" height="3.5" fill="#f4f000"/><rect x="125" y="323.6" width="1.3" height="4" fill="#f4f000"/><rect x="128" y="323.6" width="1.3" height="3.5" fill="#f4f000"/><rect x="129" y="320.1" width="1.3" height="3" fill="#f4f000"/><rect x="130" y="323.6" width="1.3" height="3" fill="#f4f000"/><rect x="132" y="323.6" width="1.3" height="3" fill="#f4f000"/><rect x="133" y="320.6" width="1.3" height="3" fill="#f4f000"/><rect x="136" y="323.6" width="1.3" height="3.5" fill="#f4f000"/><rect x="140" y="323.6" width="1.3" height="3.5" fill="#f4f000"/><rect x="143" y="323.6" width="1.3" height="3.5" fill="#f4f000"/><rect x="146" y="323.6" width="1.3" height="3.5" fill="#f4f000"/><rect x="147" y="320.6" width="1.3" height="3" fill="#f4f000"/><rect x="149" y="323.6" width="1.3" height="3.5" fill="#f4f000"/><rect x="151" y="323.6" width="1.3" height="3" fill="#f4f000"/><rect x="155" y="323.6" width="1.3" height="4" fill="#f4f000"/><rect x="157" y="323.6" width="1.3" height="3.5" fill="#f4f000"/><rect x="159" y="323.6" width="1.3" height="3.5" fill="#f4f000"/><rect x="161" y="323.6" width="1.3" height="3" fill="#f4f000"/><rect x="165" y="323.6" width="1.3" height="3" fill="#f4f000"/><rect x="167" y="323.6" width="1.3" height="3.5" fill="#f4f000"/><rect x="169" y="323.6" width="1.3" height="3.5" fill="#f4f000"/><rect x="174" y="323.6" width="1.3" height="4" fill="#f4f000"/><rect x="177" y="323.6" width="1.3" height="4" fill="#f4f000"/><rect x="180" y="323.6" width="1.3" height="3" fill="#f4f000"/><rect x="181" y="320.6" width="1.3" height="3" fill="#f4f000"/><rect x="183" y="323.6" width="1.3" height="4" fill="#f4f000"/><rect x="187" y="323.6" width="1.3" height="3.5" fill="#f4f000"/><rect x="190" y="323.6" width="1.3" height="3" fill="#f4f000"/><rect x="207" y="323.6" width="1.3" height="4" fill="#f4f000"/><rect x="210" y="323.6" width="1.3" height="3" fill="#f4f000"/><rect x="213" y="320.1" width="1.3" height="3" fill="#f4f000"/><rect x="214" y="323.6" width="1.3" height="4" fill="#f4f000"/><rect x="217" y="323.6" width="1.3" height="4" fill="#f4f000"/><rect x="218" y="320.6" width="1.3" height="3" fill="#f4f000"/><rect x="219" y="323.6" width="1.3" height="3" fill="#f4f000"/><rect x="221" y="323.6" width="1.3" height="3" fill="#f4f000"/><rect x="222" y="320.6" width="1.3" height="3" fill="#f4f000"/><rect x="224" y="323.6" width="1.3" height="4" fill="#f4f000"/><rect x="228" y="323.6" width="1.3" height="3" fill="#f4f000"/><rect x="229" y="320.1" width="1.3" height="3" fill="#f4f000"/><rect x="231" y="323.6" width="1.3" height="4" fill="#f4f000"/><rect x="235" y="323.6" width="1.3" height="3" fill="#f4f000"/><rect x="241" y="323.6" width="1.3" height="3" fill="#f4f000"/><rect x="242" y="320.1" width="1.3" height="3" fill="#f4f000"/><rect x="245" y="323.6" width="1.3" height="4" fill="#f4f000"/><rect x="246" y="320.1" width="1.3" height="3" fill="#f4f000"/><rect x="248" y="320.6" width="1.3" height="3" fill="#f4f000"/><rect x="250" y="323.6" width="1.3" height="3" fill="#f4f000"/><rect x="254" y="323.6" width="1.3" height="3" fill="#f4f000"/><rect x="260" y="323.6" width="1.3" height="3.5" fill="#f4f000"/><rect x="263" y="323.6" width="1.3" height="3" fill="#f4f000"/><rect x="268" y="323.6" width="1.3" height="3" fill="#f4f000"/><rect x="271" y="323.6" width="1.3" height="3" fill="#f4f000"/><rect x="274" y="323.6" width="1.3" height="4" fill="#f4f000"/><rect x="277" y="320.1" width="1.3" height="3" fill="#f4f000"/><rect x="278" y="323.6" width="1.3" height="3" fill="#f4f000"/><rect x="280" y="323.6" width="1.3" height="3" fill="#f4f000"/><rect x="283" y="323.6" width="1.3" height="4" fill="#f4f000"/><rect x="285" y="323.6" width="1.3" height="4" fill="#f4f000"/><rect x="288" y="323.6" width="1.3" height="3.5" fill="#f4f000"/><rect x="289" y="320.1" width="1.3" height="3" fill="#f4f000"/><rect x="290" y="323.6" width="1.3" height="3.5" fill="#f4f000"/><rect x="292" y="323.6" width="1.3" height="4" fill="#f4f000"/><rect x="297" y="320.6" width="1.3" height="3" fill="#f4f000"/><rect x="298" y="323.6" width="1.3" height="3.5" fill="#f4f000"/><rect x="299" y="320.6" width="1.3" height="3" fill="#f4f000"/><rect x="301" y="323.6" width="1.3" height="3.5" fill="#f4f000"/><rect x="304" y="323.6" width="1.3" height="4" fill="#f4f000"/><rect x="308" y="323.6" width="1.3" height="3.5" fill="#f4f000"/><rect x="309" y="320.6" width="1.3" height="3" fill="#f4f000"/><rect x="310" y="323.6" width="1.3" height="3" fill="#f4f000"/><rect x="311" y="320.6" width="1.3" height="3" fill="#f4f000"/><rect x="312" y="323.6" width="1.3" height="3" fill="#f4f000"/><rect x="314" y="323.6" width="1.3" height="3" fill="#f4f000"/><rect x="320" y="323.6" width="1.3" height="3" fill="#f4f000"/><rect x="325" y="323.6" width="1.3" height="3" fill="#f4f000"/><rect x="328" y="323.6" width="1.3" height="3" fill="#f4f000"/><rect x="329" y="320.6" width="1.3" height="3" fill="#f4f000"/><rect x="331" y="323.6" width="1.3" height="3" fill="#f4f000"/><rect x="333" y="323.6" width="1.3" height="4" fill="#f4f000"/><rect x="335" y="323.6" width="1.3" height="3" fill="#f4f000"/><rect x="337" y="323.6" width="1.3" height="4" fill="#f4f000"/><rect x="340" y="323.6" width="1.3" height="3.5" fill="#f4f000"/><rect x="343" y="323.6" width="1.3" height="3" fill="#f4f000"/><rect x="345" y="323.6" width="1.3" height="3.5" fill="#f4f000"/><rect x="347" y="323.6" width="1.3" height="4" fill="#f4f000"/><rect x="350" y="323.6" width="1.3" height="3" fill="#f4f000"/><rect x="351" y="320.1" width="1.3" height="3" fill="#f4f000"/><rect x="354" y="323.6" width="1.3" height="3.5" fill="#f4f000"/><rect x="357" y="323.6" width="1.3" height="3" fill="#f4f000"/><rect x="358" y="320.1" width="1.3" height="3" fill="#f4f000"/><rect x="359" y="323.6" width="1.3" height="3.5" fill="#f4f000"/><rect x="363" y="323.6" width="1.3" height="3" fill="#f4f000"/><rect x="366" y="323.6" width="1.3" height="3" fill="#f4f000"/><rect x="367" y="320.1" width="1.3" height="3" fill="#f4f000"/><rect x="368" y="323.6" width="1.3" height="4" fill="#f4f000"/><rect x="370" y="323.6" width="1.3" height="3" fill="#f4f000"/><rect x="371" y="320.6" width="1.3" height="3" fill="#f4f000"/><rect x="372" y="323.6" width="1.3" height="3" fill="#f4f000"/><rect x="375" y="323.6" width="1.3" height="3" fill="#f4f000"/><rect x="376" y="320.6" width="1.3" height="3" fill="#f4f000"/><rect x="379" y="323.6" width="1.3" height="3.5" fill="#f4f000"/><rect x="382" y="323.6" width="1.3" height="4" fill="#f4f000"/><rect x="384" y="323.6" width="1.3" height="4" fill="#f4f000"/><rect x="387" y="323.6" width="1.3" height="4" fill="#f4f000"/><rect x="388" y="320.6" width="1.3" height="3" fill="#f4f000"/><rect x="391" y="323.6" width="1.3" height="4" fill="#f4f000"/><rect x="393" y="323.6" width="1.3" height="3" fill="#f4f000"/><rect x="394" y="320.1" width="1.3" height="3" fill="#f4f000"/><rect x="395" y="323.6" width="1.3" height="3.5" fill="#f4f000"/><rect x="397" y="323.6" width="1.3" height="4" fill="#f4f000"/><rect x="398" y="320.1" width="1.3" height="3" fill="#f4f000"/><rect x="399" y="323.6" width="1.3" height="3" fill="#f4f000"/><rect x="404" y="320.6" width="1.3" height="3" fill="#f4f000"/><rect x="406" y="323.6" width="1.3" height="3" fill="#f4f000"/><rect x="408" y="323.6" width="1.3" height="3" fill="#f4f000"/><rect x="409" y="320.1" width="1.3" height="3" fill="#f4f000"/><rect x="411" y="323.6" width="1.3" height="3" fill="#f4f000"/><rect x="414" y="323.6" width="1.3" height="4" fill="#f4f000"/><rect x="416" y="323.6" width="1.3" height="3" fill="#f4f000"/><rect x="419" y="323.6" width="1.3" height="3" fill="#f4f000"/><rect x="420" y="320.6" width="1.3" height="3" fill="#f4f000"/><rect x="422" y="323.6" width="1.3" height="4" fill="#f4f000"/><rect x="423" y="320.6" width="1.3" height="3" fill="#f4f000"/><rect x="425" y="323.6" width="1.3" height="4" fill="#f4f000"/><rect x="426" y="320.1" width="1.3" height="3" fill="#f4f000"/><rect x="428" y="323.6" width="1.3" height="4" fill="#f4f000"/><rect x="429" y="320.6" width="1.3" height="3" fill="#f4f000"/><rect x="431" y="323.6" width="1.3" height="3.5" fill="#f4f000"/><rect x="432" y="320.1" width="1.3" height="3" fill="#f4f000"/><rect x="434" y="323.6" width="1.3" height="3" fill="#f4f000"/><rect x="435" y="320.6" width="1.3" height="3" fill="#f4f000"/><rect x="436" y="323.6" width="1.3" height="3.5" fill="#f4f000"/><rect x="438" y="323.6" width="1.3" height="4" fill="#f4f000"/><rect x="440" y="323.6" width="1.3" height="3" fill="#f4f000"/><rect x="443" y="323.6" width="1.3" height="3" fill="#f4f000"/><rect x="444" y="320.1" width="1.3" height="3" fill="#f4f000"/><rect x="446" y="323.6" width="1.3" height="4" fill="#f4f000"/><rect x="447" y="320.1" width="1.3" height="3" fill="#f4f000"/><rect x="449" y="323.6" width="1.3" height="3.5" fill="#f4f000"/><rect x="450" y="320.1" width="1.3" height="3" fill="#f4f000"/><rect x="452" y="323.6" width="1.3" height="3" fill="#f4f000"/><rect x="455" y="323.6" width="1.3" height="3" fill="#f4f000"/><rect x="459" y="323.6" width="1.3" height="3.5" fill="#f4f000"/><rect x="461" y="323.6" width="1.3" height="3" fill="#f4f000"/><rect x="464" y="323.6" width="1.3" height="3" fill="#f4f000"/><rect x="465" y="320.1" width="1.3" height="3" fill="#f4f000"/><rect x="467" y="323.6" width="1.3" height="3" fill="#f4f000"/><rect x="477" y="323.6" width="1.3" height="3" fill="#f4f000"/><rect x="478" y="320.1" width="1.3" height="3" fill="#f4f000"/><rect x="480" y="323.6" width="1.3" height="3" fill="#f4f000"/><rect x="483" y="323.6" width="1.3" height="4" fill="#f4f000"/><rect x="484" y="320.1" width="1.3" height="3" fill="#f4f000"/><rect x="486" y="323.6" width="1.3" height="3.5" fill="#f4f000"/><rect x="487" y="320.1" width="1.3" height="3" fill="#f4f000"/><rect x="489" y="323.6" width="1.3" height="3.5" fill="#f4f000"/><rect x="492" y="323.6" width="1.3" height="4" fill="#f4f000"/><rect x="493" y="320.6" width="1.3" height="3" fill="#f4f000"/><rect x="498" y="323.6" width="1.3" height="3.5" fill="#f4f000"/><rect x="501" y="323.6" width="1.3" height="4" fill="#f4f000"/><rect x="502" y="320.6" width="1.3" height="3" fill="#f4f000"/><rect x="515" y="323.6" width="1.3" height="3.5" fill="#f4f000"/><rect x="520" y="323.6" width="1.3" height="4" fill="#f4f000"/><rect x="523" y="323.6" width="1.3" height="3" fill="#f4f000"/><rect x="528" y="320.6" width="1.3" height="3" fill="#f4f000"/><rect x="529" y="323.6" width="1.3" height="3" fill="#f4f000"/><rect x="532" y="323.6" width="1.3" height="3.5" fill="#f4f000"/><rect x="534" y="323.6" width="1.3" height="3.5" fill="#f4f000"/><rect x="539" y="323.6" width="1.3" height="4" fill="#f4f000"/><rect x="542" y="323.6" width="1.3" height="3" fill="#f4f000"/><rect x="543" y="320.6" width="1.3" height="3" fill="#f4f000"/><rect x="547" y="320.1" width="1.3" height="3" fill="#f4f000"/><rect x="548" y="323.6" width="1.3" height="3" fill="#f4f000"/><rect x="549" y="320.6" width="1.3" height="3" fill="#f4f000"/><rect x="550" y="323.6" width="1.3" height="3" fill="#f4f000"/><rect x="557" y="323.6" width="1.3" height="4" fill="#f4f000"/><rect x="559" y="323.6" width="1.3" height="4" fill="#f4f000"/><rect x="561" y="323.6" width="1.3" height="3" fill="#f4f000"/><rect x="563" y="323.6" width="1.3" height="3.5" fill="#f4f000"/><rect x="568" y="323.6" width="1.3" height="3" fill="#f4f000"/><rect x="573" y="323.6" width="1.3" height="3" fill="#f4f000"/><rect x="576" y="323.6" width="1.3" height="3" fill="#f4f000"/><rect x="579" y="323.6" width="1.3" height="3" fill="#f4f000"/><rect x="582" y="323.6" width="1.3" height="3.5" fill="#f4f000"/><rect x="583" y="320.1" width="1.3" height="3" fill="#f4f000"/><rect x="586" y="323.6" width="1.3" height="3.5" fill="#f4f000"/><rect x="589" y="323.6" width="1.3" height="3" fill="#f4f000"/><rect x="590" y="320.6" width="1.3" height="3" fill="#f4f000"/><rect x="592" y="323.6" width="1.3" height="3.5" fill="#f4f000"/><rect x="593" y="320.1" width="1.3" height="3" fill="#f4f000"/><rect x="596" y="323.6" width="1.3" height="3" fill="#f4f000"/><rect x="599" y="320.1" width="1.3" height="3" fill="#f4f000"/><rect x="600" y="323.6" width="1.3" height="4" fill="#f4f000"/><rect x="601" y="320.6" width="1.3" height="3" fill="#f4f000"/><rect x="602" y="323.6" width="1.3" height="3.5" fill="#f4f000"/><rect x="605" y="323.6" width="1.3" height="3" fill="#f4f000"/><rect x="608" y="323.6" width="1.3" height="4" fill="#f4f000"/><rect x="611" y="323.6" width="1.3" height="4" fill="#f4f000"/><rect x="616" y="323.6" width="1.3" height="3.5" fill="#f4f000"/><rect x="617" y="320.1" width="1.3" height="3" fill="#f4f000"/><rect x="618" y="323.6" width="1.3" height="3" fill="#f4f000"/><rect x="621" y="323.6" width="1.3" height="3.5" fill="#f4f000"/><rect x="622" y="320.1" width="1.3" height="3" fill="#f4f000"/><rect x="623" y="323.6" width="1.3" height="3.5" fill="#f4f000"/><rect x="624" y="320.1" width="1.3" height="3" fill="#f4f000"/><rect x="626" y="323.6" width="1.3" height="3.5" fill="#f4f000"/><rect x="627" y="320.1" width="1.3" height="3" fill="#f4f000"/><rect x="628" y="323.6" width="1.3" height="3.5" fill="#f4f000"/><rect x="629" y="320.6" width="1.3" height="3" fill="#f4f000"/><rect x="631" y="323.6" width="1.3" height="3" fill="#f4f000"/><rect x="634" y="323.6" width="1.3" height="3.5" fill="#f4f000"/><rect x="638" y="323.6" width="1.3" height="4" fill="#f4f000"/><rect x="642" y="320.6" width="1.3" height="3" fill="#f4f000"/><rect x="643" y="323.6" width="1.3" height="3" fill="#f4f000"/><rect x="652" y="320.1" width="1.3" height="3" fill="#f4f000"/><rect x="653" y="323.6" width="1.3" height="3.5" fill="#f4f000"/><rect x="656" y="323.6" width="1.3" height="4" fill="#f4f000"/><rect x="657" y="320.6" width="1.3" height="3" fill="#f4f000"/><rect x="659" y="323.6" width="1.3" height="3" fill="#f4f000"/><rect x="661" y="323.6" width="1.3" height="4" fill="#f4f000"/><rect x="667" y="323.6" width="1.3" height="3" fill="#f4f000"/><rect x="668" y="320.1" width="1.3" height="3" fill="#f4f000"/><rect x="670" y="323.6" width="1.3" height="3" fill="#f4f000"/><rect x="675" y="320.6" width="1.3" height="3" fill="#f4f000"/><rect x="677" y="323.6" width="1.3" height="4" fill="#f4f000"/><rect x="678" y="320.1" width="1.3" height="3" fill="#f4f000"/><rect x="680" y="323.6" width="1.3" height="3" fill="#f4f000"/><rect x="681" y="320.6" width="1.3" height="3" fill="#f4f000"/><rect x="682" y="323.6" width="1.3" height="4" fill="#f4f000"/><rect x="683" y="320.6" width="1.3" height="3" fill="#f4f000"/><rect x="685" y="323.6" width="1.3" height="3" fill="#f4f000"/><rect x="687" y="323.6" width="1.3" height="3" fill="#f4f000"/><rect x="689" y="323.6" width="1.3" height="3.5" fill="#f4f000"/><rect x="691" y="323.6" width="1.3" height="3.5" fill="#f4f000"/><rect x="692" y="320.1" width="1.3" height="3" fill="#f4f000"/><rect x="693" y="323.6" width="1.3" height="3" fill="#f4f000"/><rect x="697" y="323.6" width="1.3" height="3" fill="#f4f000"/><rect x="699" y="323.6" width="1.3" height="3.5" fill="#f4f000"/><rect x="701" y="323.6" width="1.3" height="4" fill="#f4f000"/><rect x="704" y="323.6" width="1.3" height="3.5" fill="#f4f000"/><rect x="706" y="323.6" width="1.3" height="3.5" fill="#f4f000"/><rect x="707" y="320.6" width="1.3" height="3" fill="#f4f000"/><rect x="708" y="323.6" width="1.3" height="3.5" fill="#f4f000"/><rect x="710" y="323.6" width="1.3" height="3" fill="#f4f000"/><rect x="711" y="320.1" width="1.3" height="3" fill="#f4f000"/><rect x="714" y="323.6" width="1.3" height="3.5" fill="#f4f000"/><rect x="715" y="320.1" width="1.3" height="3" fill="#f4f000"/><rect x="718" y="323.6" width="1.3" height="4" fill="#f4f000"/><rect x="719" y="320.6" width="1.3" height="3" fill="#f4f000"/><rect x="721" y="323.6" width="1.3" height="3.5" fill="#f4f000"/><rect x="724" y="323.6" width="1.3" height="3" fill="#f4f000"/><rect x="733" y="323.6" width="1.3" height="3.5" fill="#f4f000"/><rect x="737" y="323.6" width="1.3" height="3" fill="#f4f000"/><rect x="740" y="323.6" width="1.3" height="3" fill="#f4f000"/><rect x="741" y="320.6" width="1.3" height="3" fill="#f4f000"/><rect x="744" y="323.6" width="1.3" height="3.5" fill="#f4f000"/><rect x="745" y="320.1" width="1.3" height="3" fill="#f4f000"/><rect x="748" y="323.6" width="1.3" height="3.5" fill="#f4f000"/><rect x="749" y="320.6" width="1.3" height="3" fill="#f4f000"/><rect x="750" y="323.6" width="1.3" height="3.5" fill="#f4f000"/><rect x="752" y="323.6" width="1.3" height="3" fill="#f4f000"/><rect x="755" y="323.6" width="1.3" height="4" fill="#f4f000"/><rect x="758" y="323.6" width="1.3" height="4" fill="#f4f000"/><rect x="760" y="323.6" width="1.3" height="3" fill="#f4f000"/><rect x="764" y="323.6" width="1.3" height="3.5" fill="#f4f000"/><rect x="765" y="320.6" width="1.3" height="3" fill="#f4f000"/><rect x="766" y="323.6" width="1.3" height="4" fill="#f4f000"/><rect x="767" y="320.1" width="1.3" height="3" fill="#f4f000"/><rect x="768" y="323.6" width="1.3" height="4" fill="#f4f000"/><rect x="770" y="323.6" width="1.3" height="4" fill="#f4f000"/><rect x="772" y="323.6" width="1.3" height="3.5" fill="#f4f000"/><rect x="773" y="320.1" width="1.3" height="3" fill="#f4f000"/><rect x="776" y="323.6" width="1.3" height="3.5" fill="#f4f000"/><rect x="779" y="323.6" width="1.3" height="3.5" fill="#f4f000"/><rect x="782" y="323.6" width="1.3" height="3.5" fill="#f4f000"/><rect x="783" y="320.6" width="1.3" height="3" fill="#f4f000"/><rect x="789" y="323.6" width="1.3" height="3.5" fill="#f4f000"/><rect x="792" y="323.6" width="1.3" height="3" fill="#f4f000"/><rect x="793" y="320.1" width="1.3" height="3" fill="#f4f000"/><rect x="795" y="323.6" width="1.3" height="3.5" fill="#f4f000"/><rect x="797" y="323.6" width="1.3" height="3" fill="#f4f000"/><rect x="798" y="320.1" width="1.3" height="3" fill="#f4f000"/><rect x="801" y="323.6" width="1.3" height="4" fill="#f4f000"/><rect x="803" y="323.6" width="1.3" height="3" fill="#f4f000"/><rect x="805" y="323.6" width="1.3" height="3.5" fill="#f4f000"/><rect x="806" y="320.6" width="1.3" height="3" fill="#f4f000"/><rect x="807" y="323.6" width="1.3" height="3.5" fill="#f4f000"/><rect x="825" y="323.6" width="1.3" height="3.5" fill="#f4f000"/><rect x="826" y="320.1" width="1.3" height="3" fill="#f4f000"/><rect x="829" y="323.6" width="1.3" height="3.5" fill="#f4f000"/><rect x="831" y="323.6" width="1.3" height="3" fill="#f4f000"/><rect x="834" y="323.6" width="1.3" height="3.5" fill="#f4f000"/><rect x="835" y="320.1" width="1.3" height="3" fill="#f4f000"/><rect x="836" y="323.6" width="1.3" height="3" fill="#f4f000"/><rect x="843" y="323.6" width="1.3" height="3" fill="#f4f000"/><rect x="844" y="320.1" width="1.3" height="3" fill="#f4f000"/><rect x="846" y="323.6" width="1.3" height="3.5" fill="#f4f000"/><rect x="849" y="323.6" width="1.3" height="3" fill="#f4f000"/><rect x="851" y="323.6" width="1.3" height="3" fill="#f4f000"/><rect x="852" y="320.1" width="1.3" height="3" fill="#f4f000"/><rect x="854" y="323.6" width="1.3" height="4" fill="#f4f000"/><rect x="857" y="323.6" width="1.3" height="4" fill="#f4f000"/><rect x="858" y="320.6" width="1.3" height="3" fill="#f4f000"/><rect x="860" y="323.6" width="1.3" height="3.5" fill="#f4f000"/><rect x="864" y="320.6" width="1.3" height="3" fill="#f4f000"/><rect x="867" y="323.6" width="1.3" height="3" fill="#f4f000"/><rect x="868" y="320.1" width="1.3" height="3" fill="#f4f000"/><rect x="870" y="323.6" width="1.3" height="3.5" fill="#f4f000"/><rect x="873" y="323.6" width="1.3" height="4" fill="#f4f000"/><rect x="874" y="320.1" width="1.3" height="3" fill="#f4f000"/><rect x="877" y="323.6" width="1.3" height="3" fill="#f4f000"/><rect x="878" y="320.6" width="1.3" height="3" fill="#f4f000"/><rect x="879" y="323.6" width="1.3" height="3" fill="#f4f000"/><rect x="882" y="323.6" width="1.3" height="3.5" fill="#f4f000"/><rect x="884" y="323.6" width="1.3" height="4" fill="#f4f000"/><rect x="888" y="323.6" width="1.3" height="3.5" fill="#f4f000"/><rect x="892" y="323.6" width="1.3" height="3" fill="#f4f000"/><rect x="893" y="320.6" width="1.3" height="3" fill="#f4f000"/><rect x="894" y="323.6" width="1.3" height="3" fill="#f4f000"/><rect x="896" y="323.6" width="1.3" height="3" fill="#f4f000"/><rect x="897" y="320.6" width="1.3" height="3" fill="#f4f000"/><rect x="898" y="323.6" width="1.3" height="4" fill="#f4f000"/><rect x="902" y="323.6" width="1.3" height="3.5" fill="#f4f000"/><rect x="904" y="323.6" width="1.3" height="3" fill="#f4f000"/><rect x="909" y="323.6" width="1.3" height="3" fill="#f4f000"/><rect x="912" y="323.6" width="1.3" height="3.5" fill="#f4f000"/><rect x="913" y="320.1" width="1.3" height="3" fill="#f4f000"/><rect x="914" y="323.6" width="1.3" height="3" fill="#f4f000"/><rect x="915" y="320.6" width="1.3" height="3" fill="#f4f000"/><rect x="916" y="323.6" width="1.3" height="4" fill="#f4f000"/><rect x="919" y="323.6" width="1.3" height="3.5" fill="#f4f000"/><rect x="922" y="323.6" width="1.3" height="4" fill="#f4f000"/><rect x="925" y="323.6" width="1.3" height="3" fill="#f4f000"/><rect x="926" y="320.6" width="1.3" height="3" fill="#f4f000"/><rect x="927" y="323.6" width="1.3" height="3" fill="#f4f000"/><rect x="932" y="323.6" width="1.3" height="3.5" fill="#f4f000"/></svg>
<svg class="a" style="left:0;top:312px" width="24" height="24"><path d="M0.8 1H17L22.5 11.5L17 22H0.8Z" fill="#000" stroke="#e0e000" stroke-width="1.6"/></svg>
<div class="t" style="left:4px;top:314px;color:#f0f000;font-size:18px">2</div>
<!-- bottom left -->
<div class="a" style="left:0;top:623px;width:383px;height:97px;background:#1a86d0"></div>
<div class="a" style="left:0;top:623px;width:1.5px;height:97px;background:#5a9cb0"></div>
<div class="a" style="left:0;top:717px;width:383px;height:3px;background:#62a8b8"></div>
<div class="a" style="left:250px;top:623px;width:3.5px;height:49px;background:#6ab0b4"></div>
<div class="a" style="left:0;top:671px;width:383px;height:2.5px;background:#6aaab8"></div>
<div class="a" style="left:380.5px;top:623px;width:2px;height:97px;background:#6ab0b4"></div>
<div class="a" style="left:0;top:646.8px;width:251px;height:1.4px;background:#3a7890"></div>
<div class="pan" style="left:1.5px;top:623px;width:249px;height:23.8px"></div>
<div class="pan" style="left:1.5px;top:648.2px;width:249px;height:22.8px"></div>
<div class="pan" style="left:253.5px;top:623px;width:127px;height:47.8px"></div>
<div class="pan" style="left:1.5px;top:673.3px;width:379px;height:43.7px"></div>
<svg class="a" style="left:2.75px;top:626.55px" width="19.5" height="19.5"><circle cx="9.75" cy="9.75" r="9.75" fill="#e80000"/><path d="M6.75 7.25L10.55 3.55V15.75" fill="none" stroke="#000" stroke-width="2.4" stroke-linejoin="miter"/></svg><div class="t" style="left:22px;top:628px;color:#d01010">5V-</div><div class="t" style="left:126px;top:628px;color:#d01010">0.00div</div><div class="a" style="left:2.75px;top:650.25px;width:19.5px;height:19.5px;border-radius:50%;background:#e8e000;color:#000;font:bold 17px/21.5px 'Liberation Mono',monospace;text-align:center">2</div><div class="t" style="left:22px;top:652px;color:#d8d820">2V-</div><div class="t" style="left:126px;top:652px;color:#d8d820">0.00div</div><div class="t" style="left:256.5px;top:626px;color:#e0e0e0">(1.25KS/s)</div><div class="t" style="left:260px;top:650px;color:#e0e0e0">Depth:10K</div><div class="a" style="left:1.75px;top:674.25px;width:19.5px;height:19.5px;border-radius:50%;background:#e8e000;color:#000;font:bold 17px/21.5px 'Liberation Mono',monospace;text-align:center">2</div><div class="a" style="left:1.75px;top:696.75px;width:19.5px;height:19.5px;border-radius:50%;background:#e8e000;color:#000;font:bold 17px/21.5px 'Liberation Mono',monospace;text-align:center">2</div><div class="t" style="left:25px;top:676px;color:#d8d820">F:  ?</div><div class="t" style="left:25px;top:698px;color:#d8d820">+D:  ?</div><div class="a" style="left:192.05px;top:674.75px;width:19.5px;height:19.5px;border-radius:50%;background:#e8e000;color:#000;font:bold 17px/21.5px 'Liberation Mono',monospace;text-align:center">2</div><div class="a" style="left:192.05px;top:697.25px;width:19.5px;height:19.5px;border-radius:50%;background:#e8e000;color:#000;font:bold 17px/21.5px 'Liberation Mono',monospace;text-align:center">2</div><div class="t" style="left:215px;top:676px;color:#d8d820">Vk:69.84mv</div><div class="t" style="left:215px;top:698px;color:#d8d820">V:1.132mv</div>
<div class="a" style="left:383px;top:646px;width:572px;height:71px;background:#0462a2"></div>
<div class="pill" style="left:384px;top:623.5px;width:117px;height:21.5px;border-radius:10.5px"></div>
<div class="t" style="left:398px;top:627px;color:#e8e8e8">M:400ms</div>
<div class="pill" style="left:798px;top:623.5px;width:155px;height:21.5px;border-radius:10.5px"></div>
<svg class="a" style="left:800.6px;top:624.4px" width="20" height="20"><circle cx="10.0" cy="10.0" r="10.0" fill="#e80000"/><path d="M7.0 7.5L10.8 3.8V16.0" fill="none" stroke="#000" stroke-width="2.4" stroke-linejoin="miter"/></svg><svg class="a" style="left:820px;top:624px" width="28" height="21"><path d="M2 18.5H12.5L16 2.5H26.5" fill="none" stroke="#e0e0e0" stroke-width="1.6"/></svg>
<div class="t" style="left:848px;top:627px;color:#e8e8e8">0.00mV</div>
<div class="btn" style="left:386px;top:648px;width:108px;height:67px"></div>
<div class="t" style="left:415.5px;top:659px;color:#0a2060;font-weight:bold">Type</div>
<div class="a" style="left:409px;top:685px;width:61px;height:24px;background:#e4e4e4"></div>
<div class="t" style="left:410px;top:687px;color:#000">Image</div>
<div class="btn" style="left:716px;top:648px;width:108px;height:67px"></div>
<div class="t" style="left:745px;top:673.5px;color:#0a2060;font-weight:bold">Save</div>
</body></html>
